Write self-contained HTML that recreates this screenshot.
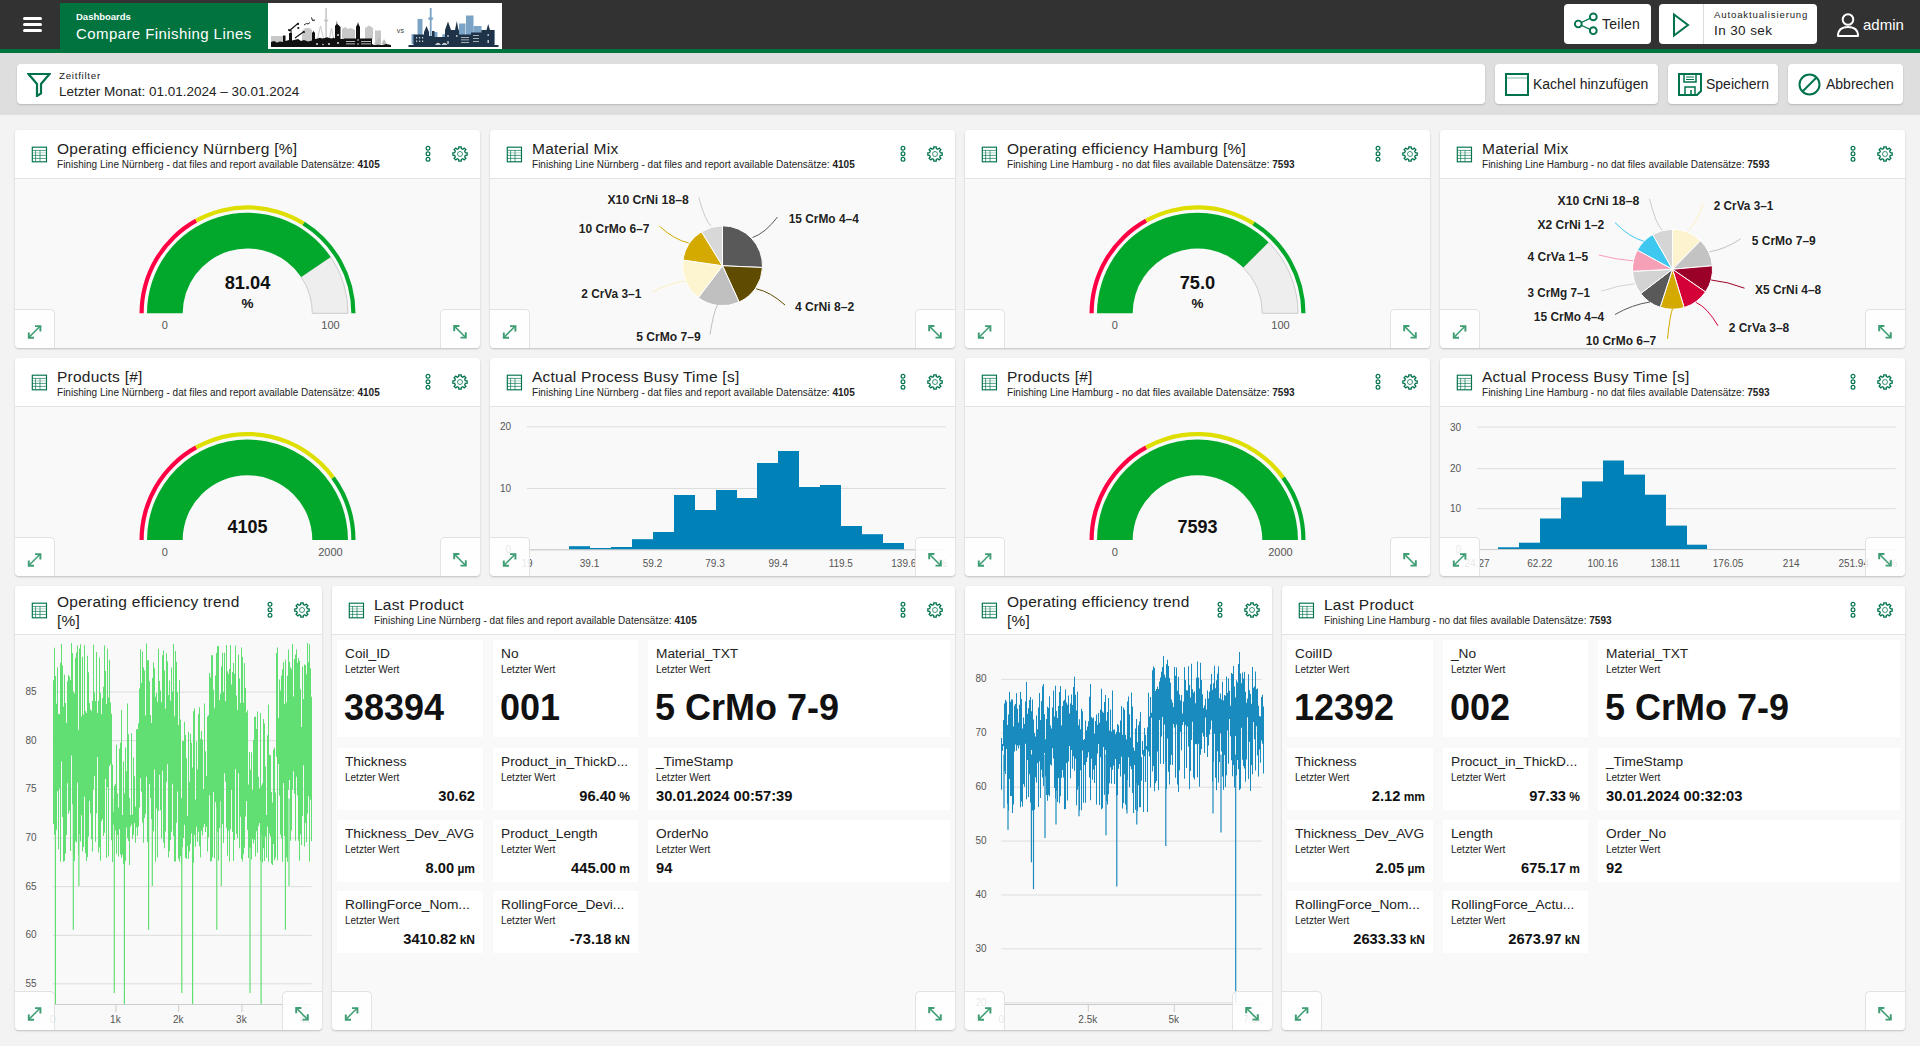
<!DOCTYPE html><html><head><meta charset="utf-8"><style>

*{box-sizing:border-box}
html,body{margin:0;padding:0}
body{width:1920px;height:1046px;overflow:hidden;background:#f3f3f3;font-family:"Liberation Sans", sans-serif;color:#222;position:relative}
.abs{position:absolute}
.hdr{position:absolute;left:0;top:0;width:1920px;height:49px;background:#323232}
.stripe{position:absolute;left:0;top:49px;width:1920px;height:4px;background:#00733f}
.tb{position:absolute;left:0;top:53px;width:1920px;height:62px;background:#dedede}
.wbtn{position:absolute;background:#fff;border-radius:4px}
.sbtn{position:absolute;background:#fff;border-radius:4px;box-shadow:0 1px 2px rgba(0,0,0,.18)}
.tile{position:absolute;background:#f9f9f9;border-radius:4px;box-shadow:0 1px 2px rgba(0,0,0,.22);overflow:hidden}
.th{position:absolute;left:0;top:0;right:0;height:49px;background:#fff;border-bottom:1px solid #e2e2e2}
.tt{position:absolute;font-size:15.5px;letter-spacing:0.24px;line-height:19px;white-space:nowrap;color:#222}
.ts{position:absolute;font-size:10px;letter-spacing:0.02px;line-height:12px;white-space:nowrap;color:#222}
.ts b{font-weight:bold}
.xb{position:absolute;width:40px;height:39px;background:rgba(255,255,255,.86);border:0 solid #e2e2e2}
.card{position:absolute;background:#fff}
.cl{position:absolute;left:8px;top:6px;font-size:13.7px;white-space:nowrap;color:#222}
.cs{position:absolute;left:8px;top:24px;font-size:10px;white-space:nowrap;color:#222}
.cv{position:absolute;left:7px;top:47px;font-size:36px;font-weight:bold;white-space:nowrap;color:#111}
.cm{position:absolute;font-size:14.7px;font-weight:bold;white-space:nowrap;color:#111}

</style></head><body>
<div class="hdr">
<div class="abs" style="left:23px;top:17px;width:19px;height:3px;background:#fff;border-radius:2px"></div>
<div class="abs" style="left:23px;top:23px;width:19px;height:3px;background:#fff;border-radius:2px"></div>
<div class="abs" style="left:23px;top:29px;width:19px;height:3px;background:#fff;border-radius:2px"></div>
<div class="abs" style="left:60px;top:3px;width:208px;height:46px;background:#00733f"></div>
<div class="abs" style="left:76px;top:11px;font-size:9.5px;font-weight:bold;color:#fff;white-space:nowrap">Dashboards</div>
<div class="abs" style="left:76px;top:25px;font-size:15px;letter-spacing:0.42px;color:#fff;white-space:nowrap">Compare Finishing Lines</div>
<div class="abs" style="left:268px;top:3px;width:234px;height:46px;background:#fff"><svg width="234" height="46" viewBox="0 0 234 46" style="position:absolute;left:0;top:0">
<g fill="#c8c8c8">
<rect x="3" y="33" width="12" height="6"/>
<path d="M34 40 V28 Q39 22 44 27 V40Z"/>
<path d="M49 38 L52.5 23 L56 38Z" fill="none" stroke="#c8c8c8" stroke-width="1"/>
<path d="M61 38 L63.5 25 L66 38Z" fill="none" stroke="#c8c8c8" stroke-width="1"/>
<rect x="57.3" y="5" width="1.6" height="33"/>
<rect x="56" y="16.5" width="4.2" height="2"/>
<path d="M74 36 V26 L77 24 L80 26 L83 25 L87 27 V36Z"/>
<path d="M97 36 V25 L101 22.5 L105 25 V36Z"/>
<rect x="107" y="27.5" width="6" height="12"/>
</g>
<g fill="#111">
<path d="M3 44 V39 L6 38 L9 39.5 L12 38.5 L15 39 V32.5 H17.5 V38 L21 37 V30 H24 V37.5 L30 36 L33 38 L36 37 L40 38.5 L44 37.5 V30 L45.5 28 L47 30 V36 L50 35.5 Q52 34 54 35.5 L57 35 Q59 33.5 61 35 L64 35.5 Q65.5 34 67 35.5 V23 L68.5 21 L68.8 17.5 L69.4 21 L71 22.5 L72.5 24 V36 H76 V35.5 H88 V24 L89.3 21.5 L90 19 L90.7 21.5 L92 24 V35.5 H104 V41 L106 42 L110 41.5 L114 42 L118 41 L123 42 V44Z"/>
<path d="M21 28 L30.5 20 M27 35 L36 28.5 M23 30 L23 27" stroke="#111" stroke-width="1.1"/>
<circle cx="30" cy="21" r="1.1"/><circle cx="30.3" cy="25" r="1.1"/><circle cx="21" cy="27" r="1"/><circle cx="36" cy="29" r="1"/>
<path d="M36 22 L38.5 20.5 L40 21 L42 19.5" stroke="#111" stroke-width="0.9" fill="none"/>
<path d="M43.5 14.5 L44.5 17.5 L47 17" stroke="#111" stroke-width="1" fill="none"/>
</g>
<g fill="#bdbdbd">
<path d="M106 41 L112 33 L113 41Z M113.5 41 L116 36 L119 41Z"/>
</g>
<text x="128.8" y="29.6" font-family="Liberation Sans" font-size="7.2" fill="#444">vs</text>
<g fill="#7ba3c6">
<rect x="149.5" y="16" width="5" height="25"/>
<rect x="161.8" y="5" width="1.8" height="36"/>
<ellipse cx="162.7" cy="15.5" rx="2.6" ry="1.6"/>
<rect x="191" y="20.5" width="6.5" height="20"/>
<rect x="198" y="12.5" width="7.5" height="28"/>
<rect x="205.5" y="23" width="8" height="18"/>
<rect x="222" y="27" width="4.5" height="14"/>
<rect x="143.5" y="31.2" width="3" height="10"/><rect x="166" y="29" width="3.4" height="12"/><rect x="174.4" y="31.2" width="5" height="10"/><rect x="214" y="30" width="4.4" height="11"/><rect x="224" y="27.3" width="2.4" height="14"/>
</g>
<g fill="#1e3248">
<path d="M140.5 44 V42 H145.5 V31.5 H156 V29 L158.5 23 L161 29 V33 H164 V28 H166.5 V34 H177 V27 L180 18.5 L183 27 H187 L188.8 18 L190.5 27 H191 V31.5 H203 V29.5 H213.4 V27 H218.5 L220.2 21 L222 27 H226.4 V42 H230.5 V44Z"/>
</g>
<g fill="#ffffff" opacity=".75">
<path d="M167 42 Q170 37.5 173 42Z M173.5 42 Q176.5 37.5 179.5 42Z"/>
<rect x="148" y="34" width="1.2" height="1.5"/><rect x="151" y="34" width="1.2" height="1.5"/><rect x="154" y="34" width="1.2" height="1.5"/>
<rect x="148" y="37.5" width="1.2" height="1.5"/><rect x="151" y="37.5" width="1.2" height="1.5"/><rect x="154" y="37.5" width="1.2" height="1.5"/>
<rect x="193" y="34" width="8" height="0.8"/><rect x="193" y="36.5" width="8" height="0.8"/><rect x="193" y="39" width="8" height="0.8"/>
<rect x="205" y="32" width="6" height="0.8"/><rect x="205" y="35" width="6" height="0.8"/><rect x="205" y="38" width="6" height="0.8"/>
<circle cx="180" cy="33" r="0.9"/><circle cx="188.8" cy="33" r="0.9"/><circle cx="220.2" cy="32" r="0.9"/>
<rect x="179.3" y="38" width="1.4" height="3"/><rect x="219.5" y="37" width="1.4" height="3"/>
</g>
<g fill="#ffffff" opacity=".85">
<rect x="78" y="38" width="9" height="0.8"/><rect x="78" y="40.5" width="9" height="0.8"/>
<rect x="93" y="38" width="10" height="0.8"/><rect x="93" y="40.5" width="10" height="0.8"/>
<circle cx="70" cy="32" r="1"/><circle cx="70" cy="40" r="1"/><circle cx="90" cy="37" r="0.8"/><circle cx="90" cy="41" r="0.8"/>
<circle cx="49" cy="41" r="1"/><circle cx="55" cy="41.5" r="0.8"/><circle cx="61" cy="41" r="1"/>
</g>
</svg></div>
<div class="wbtn" style="left:1564px;top:4px;width:87px;height:40px">
<svg style="position:absolute;left:9px;top:8px" width="26" height="26" viewBox="0 0 26 26">
<path d="M5.3 12 L20 4.9 M5.3 12 L20 18.7" stroke="#00734a" stroke-width="1.3" fill="none"/>
<circle cx="5.3" cy="12" r="3.4" fill="#fff" stroke="#00734a" stroke-width="1.9"/>
<circle cx="20.3" cy="4.9" r="3.4" fill="#fff" stroke="#00734a" stroke-width="1.9"/>
<circle cx="20.3" cy="18.7" r="3.4" fill="#fff" stroke="#00734a" stroke-width="1.9"/>
</svg>
<div class="abs" style="left:38px;top:12px;font-size:14px;letter-spacing:0.25px;color:#222;white-space:nowrap">Teilen</div>
</div>
<div class="wbtn" style="left:1659px;top:4px;width:158px;height:40px">
<svg style="position:absolute;left:12px;top:8px" width="20" height="26" viewBox="0 0 20 26">
<path d="M3 2.5 L17 13 L3 23.5Z" fill="none" stroke="#00734a" stroke-width="2" stroke-linejoin="miter"/>
</svg>
<div class="abs" style="left:44px;top:0;width:1px;height:40px;background:#dcdcdc"></div>
<div class="abs" style="left:55px;top:5px;font-size:9.6px;color:#222;white-space:nowrap;letter-spacing:0.85px">Autoaktualisierung</div>
<div class="abs" style="left:55px;top:19px;font-size:13.5px;letter-spacing:0.4px;color:#222;white-space:nowrap">In 30 sek</div>
</div>
<svg style="position:absolute;left:1836px;top:12px" width="24" height="26" viewBox="0 0 24 26">
<circle cx="12" cy="7.5" r="5.3" fill="none" stroke="#fff" stroke-width="2"/>
<path d="M2 24 C2 17 6.5 15 12 15 C17.5 15 22 17 22 24 Z" fill="none" stroke="#fff" stroke-width="2" stroke-linejoin="round"/>
</svg>
<div class="abs" style="left:1863px;top:16px;font-size:15px;color:#fff;white-space:nowrap">admin</div>
</div>
<div class="stripe"></div>
<div class="tb">
<div class="sbtn" style="left:17px;top:11px;width:1468px;height:40px">
<svg style="position:absolute;left:10px;top:8px" width="24" height="25" viewBox="0 0 24 25">
<path d="M1.5 2 H22.5 L14 12 V21.5 L10 24 V12 Z" fill="none" stroke="#00734a" stroke-width="2.2" stroke-linejoin="miter"/>
</svg>
<div class="abs" style="left:42px;top:6px;font-size:9.8px;color:#222;white-space:nowrap;letter-spacing:0.7px">Zeitfilter</div>
<div class="abs" style="left:42px;top:20px;font-size:13.5px;color:#222;white-space:nowrap">Letzter Monat: 01.01.2024 – 30.01.2024</div>
</div>
<div class="sbtn" style="left:1495px;top:11px;width:163px;height:40px">
<svg style="position:absolute;left:10px;top:9px" width="24" height="23" viewBox="0 0 24 23">
<rect x="1" y="1" width="22" height="21" fill="none" stroke="#00734a" stroke-width="2"/>
<path d="M1 5 H23" stroke="#00734a" stroke-width="1" opacity=".5"/>
</svg>
<div class="abs" style="left:38px;top:12px;font-size:14px;color:#222;white-space:nowrap">Kachel hinzufügen</div>
</div>
<div class="sbtn" style="left:1668px;top:11px;width:110px;height:40px">
<svg style="position:absolute;left:10px;top:9px" width="24" height="23" viewBox="0 0 24 23">
<path d="M1 1 H23 V18 L19 22 H1 Z" fill="none" stroke="#00734a" stroke-width="2"/>
<path d="M6 1 V9 H18 V1" fill="none" stroke="#00734a" stroke-width="1.5"/>
<path d="M8 4 H16 M8 6.5 H16" stroke="#00734a" stroke-width="1.2"/>
<path d="M7 22 V14 H17 V22 M13 17 V22" fill="none" stroke="#00734a" stroke-width="1.5"/>
</svg>
<div class="abs" style="left:38px;top:12px;font-size:14px;color:#222;white-space:nowrap">Speichern</div>
</div>
<div class="sbtn" style="left:1788px;top:11px;width:115px;height:40px">
<svg style="position:absolute;left:10px;top:9px" width="24" height="23" viewBox="0 0 24 23">
<circle cx="11.5" cy="11.5" r="10" fill="none" stroke="#00734a" stroke-width="2"/>
<path d="M4.5 18.5 L18.5 4.5" stroke="#00734a" stroke-width="2"/>
</svg>
<div class="abs" style="left:38px;top:12px;font-size:14px;color:#222;white-space:nowrap">Abbrechen</div>
</div>
</div>
<div class="tile" style="left:15px;top:130px;width:465px;height:218px">
<div class="th">
<svg style="position:absolute;left:15.5px;top:15.5px" width="17" height="17" viewBox="0 0 17 17">
<rect x="1.3" y="1.2" width="14.2" height="14.6" fill="none" stroke="#00734a" stroke-width="1.15"/>
<path d="M1.3 4.4H15.5M1.3 9.4H15.5M1.3 12.4H15.5M4.6 4.4V15.8M9 4.4V15.8" stroke="#00734a" stroke-width=".75" fill="none" opacity=".9"/>
<path d="M1.3 6.9H15.5" stroke="#00734a" stroke-width=".7" fill="none" opacity=".45"/>
</svg>
<div class="tt" style="left:42px;top:9px">Operating efficiency Nürnberg [%]</div>
<div class="ts" style="left:42px;top:29px">Finishing Line Nürnberg - dat files and report available Datensätze: <b>4105</b></div>
<svg style="position:absolute;left:408px;top:14px" width="10" height="20" viewBox="0 0 10 20">
<circle cx="5" cy="4.3" r="1.9" fill="none" stroke="#00734a" stroke-width="1.2"/>
<circle cx="5" cy="9.8" r="1.9" fill="none" stroke="#00734a" stroke-width="1.2"/>
<circle cx="5" cy="15.2" r="1.9" fill="none" stroke="#00734a" stroke-width="1.2"/>
</svg>
<svg style="position:absolute;left:435px;top:14px" width="20" height="20" viewBox="0 0 20 20">
<path d="M8.67 4.66 L8.81 2.85 L11.19 2.85 L11.33 4.66 L12.84 5.29 L14.22 4.10 L15.90 5.78 L14.71 7.16 L15.34 8.67 L17.15 8.81 L17.15 11.19 L15.34 11.33 L14.71 12.84 L15.90 14.22 L14.22 15.90 L12.84 14.71 L11.33 15.34 L11.19 17.15 L8.81 17.15 L8.67 15.34 L7.16 14.71 L5.78 15.90 L4.10 14.22 L5.29 12.84 L4.66 11.33 L2.85 11.19 L2.85 8.81 L4.66 8.67 L5.29 7.16 L4.10 5.78 L5.78 4.10 L7.16 5.29Z" fill="none" stroke="#00734a" stroke-width="1.3" stroke-linejoin="miter"/>
<circle cx="10" cy="10" r="2.5" fill="none" stroke="#00734a" stroke-width="0.9" opacity=".85"/>
</svg>
</div>
<svg style="position:absolute;left:0;top:0" width="465" height="218"><path d="M124.50 183.30 A108 108 0 0 1 180.14 88.84 L182.18 92.51 A103.8 103.8 0 0 0 128.70 183.30Z" fill="#ff0045"/><path d="M180.14 88.84 A108 108 0 0 1 289.73 91.71 L287.51 95.27 A103.8 103.8 0 0 0 182.18 92.51Z" fill="#dede00"/><path d="M289.73 91.71 A108 108 0 0 1 340.50 183.30 L336.30 183.30 A103.8 103.8 0 0 0 287.51 95.27Z" fill="#02a82b"/><path d="M315.69 126.92 A100.5 100.5 0 0 1 333.00 183.30 L297.30 183.30 A64.8 64.8 0 0 0 286.14 146.94Z" fill="#eeeeee" stroke="#cccccc" stroke-width="1"/><path d="M132.00 183.30 A100.5 100.5 0 0 1 315.69 126.92 L286.14 146.94 A64.8 64.8 0 0 0 167.70 183.30Z" fill="#02a82b"/><text x="232.5" y="158.5" text-anchor="middle" font-family="Liberation Sans" font-weight="bold" font-size="18.3" fill="#111">81.04</text><text x="232.5" y="177.8" text-anchor="middle" font-family="Liberation Sans" font-weight="bold" font-size="13.5" fill="#111">%</text><text x="149.8" y="198.8" text-anchor="middle" font-family="Liberation Sans" font-size="11" fill="#555">0</text><text x="315.5" y="198.8" text-anchor="middle" font-family="Liberation Sans" font-size="11" fill="#555">100</text></svg>
<div class="xb" style="left:0px;top:179px;border-width:1px 1px 0 0;border-radius:0 5px 0 4px"><svg width="40" height="40" viewBox="0 0 40 40" style="position:absolute;left:-1px;top:-1px">
<path d="M15.1 28.2 L26 17.3" stroke="#3f9d74" stroke-width="1.55" fill="none"/>
<path d="M21 17.1 H26.4 V22.5" stroke="#3f9d74" stroke-width="1.95" fill="none"/>
<path d="M14.8 23.5 V28.7 H20" stroke="#3f9d74" stroke-width="1.95" fill="none"/>
</svg></div>
<div class="xb" style="left:425px;top:179px;border-width:1px 0 0 1px;border-radius:5px 0 4px 0"><svg width="40" height="40" viewBox="0 0 40 40" style="position:absolute;left:-1px;top:-1px">
<path d="M14.6 17.4 L25.4 28.2" stroke="#3f9d74" stroke-width="1.55" fill="none"/>
<path d="M14.2 22.2 V17 H19.4" stroke="#3f9d74" stroke-width="1.95" fill="none"/>
<path d="M25.8 23.2 V28.6 H20.5" stroke="#3f9d74" stroke-width="1.95" fill="none"/>
</svg></div>
</div>
<div class="tile" style="left:490px;top:130px;width:465px;height:218px">
<div class="th">
<svg style="position:absolute;left:15.5px;top:15.5px" width="17" height="17" viewBox="0 0 17 17">
<rect x="1.3" y="1.2" width="14.2" height="14.6" fill="none" stroke="#00734a" stroke-width="1.15"/>
<path d="M1.3 4.4H15.5M1.3 9.4H15.5M1.3 12.4H15.5M4.6 4.4V15.8M9 4.4V15.8" stroke="#00734a" stroke-width=".75" fill="none" opacity=".9"/>
<path d="M1.3 6.9H15.5" stroke="#00734a" stroke-width=".7" fill="none" opacity=".45"/>
</svg>
<div class="tt" style="left:42px;top:9px">Material Mix</div>
<div class="ts" style="left:42px;top:29px">Finishing Line Nürnberg - dat files and report available Datensätze: <b>4105</b></div>
<svg style="position:absolute;left:408px;top:14px" width="10" height="20" viewBox="0 0 10 20">
<circle cx="5" cy="4.3" r="1.9" fill="none" stroke="#00734a" stroke-width="1.2"/>
<circle cx="5" cy="9.8" r="1.9" fill="none" stroke="#00734a" stroke-width="1.2"/>
<circle cx="5" cy="15.2" r="1.9" fill="none" stroke="#00734a" stroke-width="1.2"/>
</svg>
<svg style="position:absolute;left:435px;top:14px" width="20" height="20" viewBox="0 0 20 20">
<path d="M8.67 4.66 L8.81 2.85 L11.19 2.85 L11.33 4.66 L12.84 5.29 L14.22 4.10 L15.90 5.78 L14.71 7.16 L15.34 8.67 L17.15 8.81 L17.15 11.19 L15.34 11.33 L14.71 12.84 L15.90 14.22 L14.22 15.90 L12.84 14.71 L11.33 15.34 L11.19 17.15 L8.81 17.15 L8.67 15.34 L7.16 14.71 L5.78 15.90 L4.10 14.22 L5.29 12.84 L4.66 11.33 L2.85 11.19 L2.85 8.81 L4.66 8.67 L5.29 7.16 L4.10 5.78 L5.78 4.10 L7.16 5.29Z" fill="none" stroke="#00734a" stroke-width="1.3" stroke-linejoin="miter"/>
<circle cx="10" cy="10" r="2.5" fill="none" stroke="#00734a" stroke-width="0.9" opacity=".85"/>
</svg>
</div>
<svg style="position:absolute;left:0;top:0" width="465" height="218"><path d="M232.5 135.75 L232.50 95.75 A40 40 0 0 1 272.46 137.49Z" fill="#595959" stroke="#fff" stroke-width="1" stroke-linejoin="round"/><path d="M232.5 135.75 L272.46 137.49 A40 40 0 0 1 249.15 172.12Z" fill="#604c00" stroke="#fff" stroke-width="1" stroke-linejoin="round"/><path d="M232.5 135.75 L249.15 172.12 A40 40 0 0 1 208.32 167.61Z" fill="#c0c0c0" stroke="#fff" stroke-width="1" stroke-linejoin="round"/><path d="M232.5 135.75 L208.32 167.61 A40 40 0 0 1 192.92 129.98Z" fill="#fdf5d0" stroke="#fff" stroke-width="1" stroke-linejoin="round"/><path d="M232.5 135.75 L192.92 129.98 A40 40 0 0 1 211.48 101.72Z" fill="#d4a900" stroke="#fff" stroke-width="1" stroke-linejoin="round"/><path d="M232.5 135.75 L211.48 101.72 A40 40 0 0 1 232.50 95.75Z" fill="#d8d8d8" stroke="#fff" stroke-width="1" stroke-linejoin="round"/><path d="M208.8 67.5 Q214.9 90.3 221.0 96.0" fill="none" stroke="#cccccc" stroke-width="1"/><text x="117.5" y="74" textLength="81.2" lengthAdjust="spacingAndGlyphs" font-family="Liberation Sans" font-weight="bold" font-size="12" fill="#222" stroke="#fff" stroke-width="2" paint-order="stroke" stroke-linejoin="round">X10 CrNi 18–8</text><path d="M287.5 87.0 Q275.0 103.4 262.5 107.5" fill="none" stroke="#595959" stroke-width="1"/><text x="298.75" y="93.25" textLength="70.0" lengthAdjust="spacingAndGlyphs" font-family="Liberation Sans" font-weight="bold" font-size="12" fill="#222" stroke="#fff" stroke-width="2" paint-order="stroke" stroke-linejoin="round">15 CrMo 4–4</text><path d="M169.5 96.2 Q184.1 109.7 198.8 113.0" fill="none" stroke="#d4a900" stroke-width="1"/><text x="88.75" y="103.25" textLength="70.8" lengthAdjust="spacingAndGlyphs" font-family="Liberation Sans" font-weight="bold" font-size="12" fill="#222" stroke="#fff" stroke-width="2" paint-order="stroke" stroke-linejoin="round">10 CrMo 6–7</text><path d="M162.5 162.0 Q178.8 153.4 195.0 151.2" fill="none" stroke="#fdf0c0" stroke-width="1"/><text x="91.25" y="168.25" textLength="60.0" lengthAdjust="spacingAndGlyphs" font-family="Liberation Sans" font-weight="bold" font-size="12" fill="#222" stroke="#fff" stroke-width="2" paint-order="stroke" stroke-linejoin="round">2 CrVa 3–1</text><path d="M295.0 175.0 Q280.6 162.0 266.2 158.8" fill="none" stroke="#604c00" stroke-width="1"/><text x="305" y="181" textLength="59.2" lengthAdjust="spacingAndGlyphs" font-family="Liberation Sans" font-weight="bold" font-size="12" fill="#222" stroke="#fff" stroke-width="2" paint-order="stroke" stroke-linejoin="round">4 CrNi 8–2</text><path d="M220.0 204.5 Q223.8 180.9 227.5 175.0" fill="none" stroke="#c0c0c0" stroke-width="1"/><text x="146.25" y="211" textLength="64.5" lengthAdjust="spacingAndGlyphs" font-family="Liberation Sans" font-weight="bold" font-size="12" fill="#222" stroke="#fff" stroke-width="2" paint-order="stroke" stroke-linejoin="round">5 CrMo 7–9</text></svg>
<div class="xb" style="left:0px;top:179px;border-width:1px 1px 0 0;border-radius:0 5px 0 4px"><svg width="40" height="40" viewBox="0 0 40 40" style="position:absolute;left:-1px;top:-1px">
<path d="M15.1 28.2 L26 17.3" stroke="#3f9d74" stroke-width="1.55" fill="none"/>
<path d="M21 17.1 H26.4 V22.5" stroke="#3f9d74" stroke-width="1.95" fill="none"/>
<path d="M14.8 23.5 V28.7 H20" stroke="#3f9d74" stroke-width="1.95" fill="none"/>
</svg></div>
<div class="xb" style="left:425px;top:179px;border-width:1px 0 0 1px;border-radius:5px 0 4px 0"><svg width="40" height="40" viewBox="0 0 40 40" style="position:absolute;left:-1px;top:-1px">
<path d="M14.6 17.4 L25.4 28.2" stroke="#3f9d74" stroke-width="1.55" fill="none"/>
<path d="M14.2 22.2 V17 H19.4" stroke="#3f9d74" stroke-width="1.95" fill="none"/>
<path d="M25.8 23.2 V28.6 H20.5" stroke="#3f9d74" stroke-width="1.95" fill="none"/>
</svg></div>
</div>
<div class="tile" style="left:965px;top:130px;width:465px;height:218px">
<div class="th">
<svg style="position:absolute;left:15.5px;top:15.5px" width="17" height="17" viewBox="0 0 17 17">
<rect x="1.3" y="1.2" width="14.2" height="14.6" fill="none" stroke="#00734a" stroke-width="1.15"/>
<path d="M1.3 4.4H15.5M1.3 9.4H15.5M1.3 12.4H15.5M4.6 4.4V15.8M9 4.4V15.8" stroke="#00734a" stroke-width=".75" fill="none" opacity=".9"/>
<path d="M1.3 6.9H15.5" stroke="#00734a" stroke-width=".7" fill="none" opacity=".45"/>
</svg>
<div class="tt" style="left:42px;top:9px">Operating efficiency Hamburg [%]</div>
<div class="ts" style="left:42px;top:29px">Finishing Line Hamburg - no dat files available Datensätze: <b>7593</b></div>
<svg style="position:absolute;left:408px;top:14px" width="10" height="20" viewBox="0 0 10 20">
<circle cx="5" cy="4.3" r="1.9" fill="none" stroke="#00734a" stroke-width="1.2"/>
<circle cx="5" cy="9.8" r="1.9" fill="none" stroke="#00734a" stroke-width="1.2"/>
<circle cx="5" cy="15.2" r="1.9" fill="none" stroke="#00734a" stroke-width="1.2"/>
</svg>
<svg style="position:absolute;left:435px;top:14px" width="20" height="20" viewBox="0 0 20 20">
<path d="M8.67 4.66 L8.81 2.85 L11.19 2.85 L11.33 4.66 L12.84 5.29 L14.22 4.10 L15.90 5.78 L14.71 7.16 L15.34 8.67 L17.15 8.81 L17.15 11.19 L15.34 11.33 L14.71 12.84 L15.90 14.22 L14.22 15.90 L12.84 14.71 L11.33 15.34 L11.19 17.15 L8.81 17.15 L8.67 15.34 L7.16 14.71 L5.78 15.90 L4.10 14.22 L5.29 12.84 L4.66 11.33 L2.85 11.19 L2.85 8.81 L4.66 8.67 L5.29 7.16 L4.10 5.78 L5.78 4.10 L7.16 5.29Z" fill="none" stroke="#00734a" stroke-width="1.3" stroke-linejoin="miter"/>
<circle cx="10" cy="10" r="2.5" fill="none" stroke="#00734a" stroke-width="0.9" opacity=".85"/>
</svg>
</div>
<svg style="position:absolute;left:0;top:0" width="465" height="218"><path d="M124.50 183.30 A108 108 0 0 1 180.14 88.84 L182.18 92.51 A103.8 103.8 0 0 0 128.70 183.30Z" fill="#ff0045"/><path d="M180.14 88.84 A108 108 0 0 1 289.73 91.71 L287.51 95.27 A103.8 103.8 0 0 0 182.18 92.51Z" fill="#dede00"/><path d="M289.73 91.71 A108 108 0 0 1 340.50 183.30 L336.30 183.30 A103.8 103.8 0 0 0 287.51 95.27Z" fill="#02a82b"/><path d="M303.56 112.24 A100.5 100.5 0 0 1 333.00 183.30 L297.30 183.30 A64.8 64.8 0 0 0 278.32 137.48Z" fill="#eeeeee" stroke="#cccccc" stroke-width="1"/><path d="M132.00 183.30 A100.5 100.5 0 0 1 303.56 112.24 L278.32 137.48 A64.8 64.8 0 0 0 167.70 183.30Z" fill="#02a82b"/><text x="232.5" y="158.5" text-anchor="middle" font-family="Liberation Sans" font-weight="bold" font-size="18.3" fill="#111">75.0</text><text x="232.5" y="177.8" text-anchor="middle" font-family="Liberation Sans" font-weight="bold" font-size="13.5" fill="#111">%</text><text x="149.8" y="198.8" text-anchor="middle" font-family="Liberation Sans" font-size="11" fill="#555">0</text><text x="315.5" y="198.8" text-anchor="middle" font-family="Liberation Sans" font-size="11" fill="#555">100</text></svg>
<div class="xb" style="left:0px;top:179px;border-width:1px 1px 0 0;border-radius:0 5px 0 4px"><svg width="40" height="40" viewBox="0 0 40 40" style="position:absolute;left:-1px;top:-1px">
<path d="M15.1 28.2 L26 17.3" stroke="#3f9d74" stroke-width="1.55" fill="none"/>
<path d="M21 17.1 H26.4 V22.5" stroke="#3f9d74" stroke-width="1.95" fill="none"/>
<path d="M14.8 23.5 V28.7 H20" stroke="#3f9d74" stroke-width="1.95" fill="none"/>
</svg></div>
<div class="xb" style="left:425px;top:179px;border-width:1px 0 0 1px;border-radius:5px 0 4px 0"><svg width="40" height="40" viewBox="0 0 40 40" style="position:absolute;left:-1px;top:-1px">
<path d="M14.6 17.4 L25.4 28.2" stroke="#3f9d74" stroke-width="1.55" fill="none"/>
<path d="M14.2 22.2 V17 H19.4" stroke="#3f9d74" stroke-width="1.95" fill="none"/>
<path d="M25.8 23.2 V28.6 H20.5" stroke="#3f9d74" stroke-width="1.95" fill="none"/>
</svg></div>
</div>
<div class="tile" style="left:1440px;top:130px;width:465px;height:218px">
<div class="th">
<svg style="position:absolute;left:15.5px;top:15.5px" width="17" height="17" viewBox="0 0 17 17">
<rect x="1.3" y="1.2" width="14.2" height="14.6" fill="none" stroke="#00734a" stroke-width="1.15"/>
<path d="M1.3 4.4H15.5M1.3 9.4H15.5M1.3 12.4H15.5M4.6 4.4V15.8M9 4.4V15.8" stroke="#00734a" stroke-width=".75" fill="none" opacity=".9"/>
<path d="M1.3 6.9H15.5" stroke="#00734a" stroke-width=".7" fill="none" opacity=".45"/>
</svg>
<div class="tt" style="left:42px;top:9px">Material Mix</div>
<div class="ts" style="left:42px;top:29px">Finishing Line Hamburg - no dat files available Datensätze: <b>7593</b></div>
<svg style="position:absolute;left:408px;top:14px" width="10" height="20" viewBox="0 0 10 20">
<circle cx="5" cy="4.3" r="1.9" fill="none" stroke="#00734a" stroke-width="1.2"/>
<circle cx="5" cy="9.8" r="1.9" fill="none" stroke="#00734a" stroke-width="1.2"/>
<circle cx="5" cy="15.2" r="1.9" fill="none" stroke="#00734a" stroke-width="1.2"/>
</svg>
<svg style="position:absolute;left:435px;top:14px" width="20" height="20" viewBox="0 0 20 20">
<path d="M8.67 4.66 L8.81 2.85 L11.19 2.85 L11.33 4.66 L12.84 5.29 L14.22 4.10 L15.90 5.78 L14.71 7.16 L15.34 8.67 L17.15 8.81 L17.15 11.19 L15.34 11.33 L14.71 12.84 L15.90 14.22 L14.22 15.90 L12.84 14.71 L11.33 15.34 L11.19 17.15 L8.81 17.15 L8.67 15.34 L7.16 14.71 L5.78 15.90 L4.10 14.22 L5.29 12.84 L4.66 11.33 L2.85 11.19 L2.85 8.81 L4.66 8.67 L5.29 7.16 L4.10 5.78 L5.78 4.10 L7.16 5.29Z" fill="none" stroke="#00734a" stroke-width="1.3" stroke-linejoin="miter"/>
<circle cx="10" cy="10" r="2.5" fill="none" stroke="#00734a" stroke-width="0.9" opacity=".85"/>
</svg>
</div>
<svg style="position:absolute;left:0;top:0" width="465" height="218"><path d="M232.5 139.25 L232.50 99.25 A40 40 0 0 1 260.54 110.72Z" fill="#fdf3cf" stroke="#fff" stroke-width="1" stroke-linejoin="round"/><path d="M232.5 139.25 L260.54 110.72 A40 40 0 0 1 272.35 135.76Z" fill="#c3c3c3" stroke="#fff" stroke-width="1" stroke-linejoin="round"/><path d="M232.5 139.25 L272.35 135.76 A40 40 0 0 1 265.47 161.91Z" fill="#9b0029" stroke="#fff" stroke-width="1" stroke-linejoin="round"/><path d="M232.5 139.25 L265.47 161.91 A40 40 0 0 1 244.13 177.52Z" fill="#d40038" stroke="#fff" stroke-width="1" stroke-linejoin="round"/><path d="M232.5 139.25 L244.13 177.52 A40 40 0 0 1 220.14 177.29Z" fill="#d4a900" stroke="#fff" stroke-width="1" stroke-linejoin="round"/><path d="M232.5 139.25 L220.14 177.29 A40 40 0 0 1 200.68 163.49Z" fill="#595959" stroke="#fff" stroke-width="1" stroke-linejoin="round"/><path d="M232.5 139.25 L200.68 163.49 A40 40 0 0 1 192.55 141.27Z" fill="#d3d3d3" stroke="#fff" stroke-width="1" stroke-linejoin="round"/><path d="M232.5 139.25 L192.55 141.27 A40 40 0 0 1 197.41 120.04Z" fill="#f6a0b8" stroke="#fff" stroke-width="1" stroke-linejoin="round"/><path d="M232.5 139.25 L197.41 120.04 A40 40 0 0 1 212.68 104.50Z" fill="#3ec8f0" stroke="#fff" stroke-width="1" stroke-linejoin="round"/><path d="M232.5 139.25 L212.68 104.50 A40 40 0 0 1 232.50 99.25Z" fill="#d5d5d5" stroke="#fff" stroke-width="1" stroke-linejoin="round"/><path d="M209.5 68.8 Q215.8 93.8 222.0 100.0" fill="none" stroke="#cccccc" stroke-width="1"/><text x="117.5" y="74.75" textLength="81.8" lengthAdjust="spacingAndGlyphs" font-family="Liberation Sans" font-weight="bold" font-size="12" fill="#222" stroke="#fff" stroke-width="2" paint-order="stroke" stroke-linejoin="round">X10 CrNi 18–8</text><path d="M263.0 73.8 Q255.2 95.8 247.5 101.2" fill="none" stroke="#fdf0c0" stroke-width="1"/><text x="273.75" y="80.25" textLength="59.5" lengthAdjust="spacingAndGlyphs" font-family="Liberation Sans" font-weight="bold" font-size="12" fill="#222" stroke="#fff" stroke-width="2" paint-order="stroke" stroke-linejoin="round">2 CrVa 3–1</text><path d="M175.0 92.5 Q189.4 107.5 203.8 111.2" fill="none" stroke="#3ec8f0" stroke-width="1"/><text x="97.5" y="99" textLength="66.8" lengthAdjust="spacingAndGlyphs" font-family="Liberation Sans" font-weight="bold" font-size="12" fill="#222" stroke="#fff" stroke-width="2" paint-order="stroke" stroke-linejoin="round">X2 CrNi 1–2</text><path d="M300.8 108.8 Q285.1 119.2 269.5 121.8" fill="none" stroke="#c3c3c3" stroke-width="1"/><text x="311.75" y="115.25" textLength="64.0" lengthAdjust="spacingAndGlyphs" font-family="Liberation Sans" font-weight="bold" font-size="12" fill="#222" stroke="#fff" stroke-width="2" paint-order="stroke" stroke-linejoin="round">5 CrMo 7–9</text><path d="M158.8 125.0 Q175.9 129.6 193.0 130.8" fill="none" stroke="#f6a0b8" stroke-width="1"/><text x="87.5" y="131" textLength="60.8" lengthAdjust="spacingAndGlyphs" font-family="Liberation Sans" font-weight="bold" font-size="12" fill="#222" stroke="#fff" stroke-width="2" paint-order="stroke" stroke-linejoin="round">4 CrVa 1–5</text><path d="M161.2 161.2 Q177.9 155.2 194.5 153.8" fill="none" stroke="#d3d3d3" stroke-width="1"/><text x="87.5" y="166.5" textLength="62.5" lengthAdjust="spacingAndGlyphs" font-family="Liberation Sans" font-weight="bold" font-size="12" fill="#222" stroke="#fff" stroke-width="2" paint-order="stroke" stroke-linejoin="round">3 CrMg 7–1</text><path d="M304.5 158.2 Q287.9 151.7 271.2 150.0" fill="none" stroke="#9b0029" stroke-width="1"/><text x="315" y="164" textLength="66.2" lengthAdjust="spacingAndGlyphs" font-family="Liberation Sans" font-weight="bold" font-size="12" fill="#222" stroke="#fff" stroke-width="2" paint-order="stroke" stroke-linejoin="round">X5 CrNi 4–8</text><path d="M175.0 184.5 Q192.5 174.5 210.0 172.0" fill="none" stroke="#595959" stroke-width="1"/><text x="93.75" y="191" textLength="70.5" lengthAdjust="spacingAndGlyphs" font-family="Liberation Sans" font-weight="bold" font-size="12" fill="#222" stroke="#fff" stroke-width="2" paint-order="stroke" stroke-linejoin="round">15 CrMo 4–4</text><path d="M278.0 195.8 Q267.1 177.2 256.2 172.5" fill="none" stroke="#d40038" stroke-width="1"/><text x="288.75" y="202" textLength="60.5" lengthAdjust="spacingAndGlyphs" font-family="Liberation Sans" font-weight="bold" font-size="12" fill="#222" stroke="#fff" stroke-width="2" paint-order="stroke" stroke-linejoin="round">2 CrVa 3–8</text><path d="M227.5 208.8 Q230.0 184.8 232.5 178.8" fill="none" stroke="#d4a900" stroke-width="1"/><text x="145.75" y="214.75" textLength="70.5" lengthAdjust="spacingAndGlyphs" font-family="Liberation Sans" font-weight="bold" font-size="12" fill="#222" stroke="#fff" stroke-width="2" paint-order="stroke" stroke-linejoin="round">10 CrMo 6–7</text></svg>
<div class="xb" style="left:0px;top:179px;border-width:1px 1px 0 0;border-radius:0 5px 0 4px"><svg width="40" height="40" viewBox="0 0 40 40" style="position:absolute;left:-1px;top:-1px">
<path d="M15.1 28.2 L26 17.3" stroke="#3f9d74" stroke-width="1.55" fill="none"/>
<path d="M21 17.1 H26.4 V22.5" stroke="#3f9d74" stroke-width="1.95" fill="none"/>
<path d="M14.8 23.5 V28.7 H20" stroke="#3f9d74" stroke-width="1.95" fill="none"/>
</svg></div>
<div class="xb" style="left:425px;top:179px;border-width:1px 0 0 1px;border-radius:5px 0 4px 0"><svg width="40" height="40" viewBox="0 0 40 40" style="position:absolute;left:-1px;top:-1px">
<path d="M14.6 17.4 L25.4 28.2" stroke="#3f9d74" stroke-width="1.55" fill="none"/>
<path d="M14.2 22.2 V17 H19.4" stroke="#3f9d74" stroke-width="1.95" fill="none"/>
<path d="M25.8 23.2 V28.6 H20.5" stroke="#3f9d74" stroke-width="1.95" fill="none"/>
</svg></div>
</div>
<div class="tile" style="left:15px;top:358px;width:465px;height:218px">
<div class="th">
<svg style="position:absolute;left:15.5px;top:15.5px" width="17" height="17" viewBox="0 0 17 17">
<rect x="1.3" y="1.2" width="14.2" height="14.6" fill="none" stroke="#00734a" stroke-width="1.15"/>
<path d="M1.3 4.4H15.5M1.3 9.4H15.5M1.3 12.4H15.5M4.6 4.4V15.8M9 4.4V15.8" stroke="#00734a" stroke-width=".75" fill="none" opacity=".9"/>
<path d="M1.3 6.9H15.5" stroke="#00734a" stroke-width=".7" fill="none" opacity=".45"/>
</svg>
<div class="tt" style="left:42px;top:9px">Products [#]</div>
<div class="ts" style="left:42px;top:29px">Finishing Line Nürnberg - dat files and report available Datensätze: <b>4105</b></div>
<svg style="position:absolute;left:408px;top:14px" width="10" height="20" viewBox="0 0 10 20">
<circle cx="5" cy="4.3" r="1.9" fill="none" stroke="#00734a" stroke-width="1.2"/>
<circle cx="5" cy="9.8" r="1.9" fill="none" stroke="#00734a" stroke-width="1.2"/>
<circle cx="5" cy="15.2" r="1.9" fill="none" stroke="#00734a" stroke-width="1.2"/>
</svg>
<svg style="position:absolute;left:435px;top:14px" width="20" height="20" viewBox="0 0 20 20">
<path d="M8.67 4.66 L8.81 2.85 L11.19 2.85 L11.33 4.66 L12.84 5.29 L14.22 4.10 L15.90 5.78 L14.71 7.16 L15.34 8.67 L17.15 8.81 L17.15 11.19 L15.34 11.33 L14.71 12.84 L15.90 14.22 L14.22 15.90 L12.84 14.71 L11.33 15.34 L11.19 17.15 L8.81 17.15 L8.67 15.34 L7.16 14.71 L5.78 15.90 L4.10 14.22 L5.29 12.84 L4.66 11.33 L2.85 11.19 L2.85 8.81 L4.66 8.67 L5.29 7.16 L4.10 5.78 L5.78 4.10 L7.16 5.29Z" fill="none" stroke="#00734a" stroke-width="1.3" stroke-linejoin="miter"/>
<circle cx="10" cy="10" r="2.5" fill="none" stroke="#00734a" stroke-width="0.9" opacity=".85"/>
</svg>
</div>
<svg style="position:absolute;left:0;top:0" width="465" height="218"><path d="M124.50 182.00 A108 108 0 0 1 180.14 87.54 L182.18 91.21 A103.8 103.8 0 0 0 128.70 182.00Z" fill="#ff0045"/><path d="M180.14 87.54 A108 108 0 0 1 319.87 118.52 L316.48 120.99 A103.8 103.8 0 0 0 182.18 91.21Z" fill="#dede00"/><path d="M319.87 118.52 A108 108 0 0 1 340.50 182.00 L336.30 182.00 A103.8 103.8 0 0 0 316.48 120.99Z" fill="#02a82b"/><path d="M132.00 182.00 A100.5 100.5 0 0 1 333.00 182.00 L297.30 182.00 A64.8 64.8 0 0 0 167.70 182.00Z" fill="#02a82b"/><text x="232.5" y="174.8" text-anchor="middle" font-family="Liberation Sans" font-weight="bold" font-size="18" fill="#111">4105</text><text x="149.8" y="197.5" text-anchor="middle" font-family="Liberation Sans" font-size="11" fill="#555">0</text><text x="315.5" y="197.5" text-anchor="middle" font-family="Liberation Sans" font-size="11" fill="#555">2000</text></svg>
<div class="xb" style="left:0px;top:179px;border-width:1px 1px 0 0;border-radius:0 5px 0 4px"><svg width="40" height="40" viewBox="0 0 40 40" style="position:absolute;left:-1px;top:-1px">
<path d="M15.1 28.2 L26 17.3" stroke="#3f9d74" stroke-width="1.55" fill="none"/>
<path d="M21 17.1 H26.4 V22.5" stroke="#3f9d74" stroke-width="1.95" fill="none"/>
<path d="M14.8 23.5 V28.7 H20" stroke="#3f9d74" stroke-width="1.95" fill="none"/>
</svg></div>
<div class="xb" style="left:425px;top:179px;border-width:1px 0 0 1px;border-radius:5px 0 4px 0"><svg width="40" height="40" viewBox="0 0 40 40" style="position:absolute;left:-1px;top:-1px">
<path d="M14.6 17.4 L25.4 28.2" stroke="#3f9d74" stroke-width="1.55" fill="none"/>
<path d="M14.2 22.2 V17 H19.4" stroke="#3f9d74" stroke-width="1.95" fill="none"/>
<path d="M25.8 23.2 V28.6 H20.5" stroke="#3f9d74" stroke-width="1.95" fill="none"/>
</svg></div>
</div>
<div class="tile" style="left:490px;top:358px;width:465px;height:218px">
<div class="th">
<svg style="position:absolute;left:15.5px;top:15.5px" width="17" height="17" viewBox="0 0 17 17">
<rect x="1.3" y="1.2" width="14.2" height="14.6" fill="none" stroke="#00734a" stroke-width="1.15"/>
<path d="M1.3 4.4H15.5M1.3 9.4H15.5M1.3 12.4H15.5M4.6 4.4V15.8M9 4.4V15.8" stroke="#00734a" stroke-width=".75" fill="none" opacity=".9"/>
<path d="M1.3 6.9H15.5" stroke="#00734a" stroke-width=".7" fill="none" opacity=".45"/>
</svg>
<div class="tt" style="left:42px;top:9px">Actual Process Busy Time [s]</div>
<div class="ts" style="left:42px;top:29px">Finishing Line Nürnberg - dat files and report available Datensätze: <b>4105</b></div>
<svg style="position:absolute;left:408px;top:14px" width="10" height="20" viewBox="0 0 10 20">
<circle cx="5" cy="4.3" r="1.9" fill="none" stroke="#00734a" stroke-width="1.2"/>
<circle cx="5" cy="9.8" r="1.9" fill="none" stroke="#00734a" stroke-width="1.2"/>
<circle cx="5" cy="15.2" r="1.9" fill="none" stroke="#00734a" stroke-width="1.2"/>
</svg>
<svg style="position:absolute;left:435px;top:14px" width="20" height="20" viewBox="0 0 20 20">
<path d="M8.67 4.66 L8.81 2.85 L11.19 2.85 L11.33 4.66 L12.84 5.29 L14.22 4.10 L15.90 5.78 L14.71 7.16 L15.34 8.67 L17.15 8.81 L17.15 11.19 L15.34 11.33 L14.71 12.84 L15.90 14.22 L14.22 15.90 L12.84 14.71 L11.33 15.34 L11.19 17.15 L8.81 17.15 L8.67 15.34 L7.16 14.71 L5.78 15.90 L4.10 14.22 L5.29 12.84 L4.66 11.33 L2.85 11.19 L2.85 8.81 L4.66 8.67 L5.29 7.16 L4.10 5.78 L5.78 4.10 L7.16 5.29Z" fill="none" stroke="#00734a" stroke-width="1.3" stroke-linejoin="miter"/>
<circle cx="10" cy="10" r="2.5" fill="none" stroke="#00734a" stroke-width="0.9" opacity=".85"/>
</svg>
</div>
<svg style="position:absolute;left:0;top:0" width="465" height="218"><line x1="37" y1="68.8" x2="455.5" y2="68.8" stroke="#dddddd" stroke-width="1"/><text x="21" y="72.2" text-anchor="end" font-family="Liberation Sans" font-size="10" fill="#555">20</text><line x1="37" y1="130.5" x2="455.5" y2="130.5" stroke="#dddddd" stroke-width="1"/><text x="21" y="134.0" text-anchor="end" font-family="Liberation Sans" font-size="10" fill="#555">10</text><line x1="37" y1="191.8" x2="455.5" y2="191.8" stroke="#dddddd" stroke-width="1"/><text x="21" y="195.2" text-anchor="end" font-family="Liberation Sans" font-size="10" fill="#555">0</text><rect x="79.0" y="188.2" width="21.0" height="3.5" fill="#0082b8"/><rect x="100.0" y="190.0" width="21.0" height="1.8" fill="#0082b8"/><rect x="121.0" y="189.0" width="21.0" height="2.8" fill="#0082b8"/><rect x="142.0" y="181.2" width="21.0" height="10.5" fill="#0082b8"/><rect x="163.0" y="174.0" width="21.0" height="17.8" fill="#0082b8"/><rect x="184.0" y="137.0" width="21.0" height="54.8" fill="#0082b8"/><rect x="205.0" y="152.0" width="21.0" height="39.8" fill="#0082b8"/><rect x="226.0" y="132.0" width="21.0" height="59.8" fill="#0082b8"/><rect x="247.0" y="140.0" width="20.0" height="51.8" fill="#0082b8"/><rect x="267.0" y="105.0" width="21.0" height="86.8" fill="#0082b8"/><rect x="288.0" y="93.0" width="21.0" height="98.8" fill="#0082b8"/><rect x="309.0" y="129.0" width="21.0" height="62.8" fill="#0082b8"/><rect x="330.0" y="127.0" width="21.0" height="64.8" fill="#0082b8"/><rect x="351.0" y="168.0" width="21.0" height="23.8" fill="#0082b8"/><rect x="372.0" y="176.2" width="21.0" height="15.5" fill="#0082b8"/><rect x="393.0" y="185.0" width="21.0" height="6.8" fill="#0082b8"/><line x1="37" y1="191.75" x2="455.5" y2="191.75" stroke="#cccccc" stroke-width="1"/><text x="37.0" y="209.0" text-anchor="middle" font-family="Liberation Sans" font-size="10" fill="#555">19</text><text x="99.5" y="209.0" text-anchor="middle" font-family="Liberation Sans" font-size="10" fill="#555">39.1</text><text x="162.5" y="209.0" text-anchor="middle" font-family="Liberation Sans" font-size="10" fill="#555">59.2</text><text x="225.0" y="209.0" text-anchor="middle" font-family="Liberation Sans" font-size="10" fill="#555">79.3</text><text x="288.2" y="209.0" text-anchor="middle" font-family="Liberation Sans" font-size="10" fill="#555">99.4</text><text x="350.8" y="209.0" text-anchor="middle" font-family="Liberation Sans" font-size="10" fill="#555">119.5</text><text x="413.8" y="209.0" text-anchor="middle" font-family="Liberation Sans" font-size="10" fill="#555">139.6</text><text x="452.5" y="209.0" text-anchor="middle" font-family="Liberation Sans" font-size="10" fill="#555">%</text></svg>
<div class="xb" style="left:0px;top:179px;border-width:1px 1px 0 0;border-radius:0 5px 0 4px"><svg width="40" height="40" viewBox="0 0 40 40" style="position:absolute;left:-1px;top:-1px">
<path d="M15.1 28.2 L26 17.3" stroke="#3f9d74" stroke-width="1.55" fill="none"/>
<path d="M21 17.1 H26.4 V22.5" stroke="#3f9d74" stroke-width="1.95" fill="none"/>
<path d="M14.8 23.5 V28.7 H20" stroke="#3f9d74" stroke-width="1.95" fill="none"/>
</svg></div>
<div class="xb" style="left:425px;top:179px;border-width:1px 0 0 1px;border-radius:5px 0 4px 0"><svg width="40" height="40" viewBox="0 0 40 40" style="position:absolute;left:-1px;top:-1px">
<path d="M14.6 17.4 L25.4 28.2" stroke="#3f9d74" stroke-width="1.55" fill="none"/>
<path d="M14.2 22.2 V17 H19.4" stroke="#3f9d74" stroke-width="1.95" fill="none"/>
<path d="M25.8 23.2 V28.6 H20.5" stroke="#3f9d74" stroke-width="1.95" fill="none"/>
</svg></div>
</div>
<div class="tile" style="left:965px;top:358px;width:465px;height:218px">
<div class="th">
<svg style="position:absolute;left:15.5px;top:15.5px" width="17" height="17" viewBox="0 0 17 17">
<rect x="1.3" y="1.2" width="14.2" height="14.6" fill="none" stroke="#00734a" stroke-width="1.15"/>
<path d="M1.3 4.4H15.5M1.3 9.4H15.5M1.3 12.4H15.5M4.6 4.4V15.8M9 4.4V15.8" stroke="#00734a" stroke-width=".75" fill="none" opacity=".9"/>
<path d="M1.3 6.9H15.5" stroke="#00734a" stroke-width=".7" fill="none" opacity=".45"/>
</svg>
<div class="tt" style="left:42px;top:9px">Products [#]</div>
<div class="ts" style="left:42px;top:29px">Finishing Line Hamburg - no dat files available Datensätze: <b>7593</b></div>
<svg style="position:absolute;left:408px;top:14px" width="10" height="20" viewBox="0 0 10 20">
<circle cx="5" cy="4.3" r="1.9" fill="none" stroke="#00734a" stroke-width="1.2"/>
<circle cx="5" cy="9.8" r="1.9" fill="none" stroke="#00734a" stroke-width="1.2"/>
<circle cx="5" cy="15.2" r="1.9" fill="none" stroke="#00734a" stroke-width="1.2"/>
</svg>
<svg style="position:absolute;left:435px;top:14px" width="20" height="20" viewBox="0 0 20 20">
<path d="M8.67 4.66 L8.81 2.85 L11.19 2.85 L11.33 4.66 L12.84 5.29 L14.22 4.10 L15.90 5.78 L14.71 7.16 L15.34 8.67 L17.15 8.81 L17.15 11.19 L15.34 11.33 L14.71 12.84 L15.90 14.22 L14.22 15.90 L12.84 14.71 L11.33 15.34 L11.19 17.15 L8.81 17.15 L8.67 15.34 L7.16 14.71 L5.78 15.90 L4.10 14.22 L5.29 12.84 L4.66 11.33 L2.85 11.19 L2.85 8.81 L4.66 8.67 L5.29 7.16 L4.10 5.78 L5.78 4.10 L7.16 5.29Z" fill="none" stroke="#00734a" stroke-width="1.3" stroke-linejoin="miter"/>
<circle cx="10" cy="10" r="2.5" fill="none" stroke="#00734a" stroke-width="0.9" opacity=".85"/>
</svg>
</div>
<svg style="position:absolute;left:0;top:0" width="465" height="218"><path d="M124.50 182.00 A108 108 0 0 1 180.14 87.54 L182.18 91.21 A103.8 103.8 0 0 0 128.70 182.00Z" fill="#ff0045"/><path d="M180.14 87.54 A108 108 0 0 1 319.87 118.52 L316.48 120.99 A103.8 103.8 0 0 0 182.18 91.21Z" fill="#dede00"/><path d="M319.87 118.52 A108 108 0 0 1 340.50 182.00 L336.30 182.00 A103.8 103.8 0 0 0 316.48 120.99Z" fill="#02a82b"/><path d="M132.00 182.00 A100.5 100.5 0 0 1 333.00 182.00 L297.30 182.00 A64.8 64.8 0 0 0 167.70 182.00Z" fill="#02a82b"/><text x="232.5" y="174.8" text-anchor="middle" font-family="Liberation Sans" font-weight="bold" font-size="18" fill="#111">7593</text><text x="149.8" y="197.5" text-anchor="middle" font-family="Liberation Sans" font-size="11" fill="#555">0</text><text x="315.5" y="197.5" text-anchor="middle" font-family="Liberation Sans" font-size="11" fill="#555">2000</text></svg>
<div class="xb" style="left:0px;top:179px;border-width:1px 1px 0 0;border-radius:0 5px 0 4px"><svg width="40" height="40" viewBox="0 0 40 40" style="position:absolute;left:-1px;top:-1px">
<path d="M15.1 28.2 L26 17.3" stroke="#3f9d74" stroke-width="1.55" fill="none"/>
<path d="M21 17.1 H26.4 V22.5" stroke="#3f9d74" stroke-width="1.95" fill="none"/>
<path d="M14.8 23.5 V28.7 H20" stroke="#3f9d74" stroke-width="1.95" fill="none"/>
</svg></div>
<div class="xb" style="left:425px;top:179px;border-width:1px 0 0 1px;border-radius:5px 0 4px 0"><svg width="40" height="40" viewBox="0 0 40 40" style="position:absolute;left:-1px;top:-1px">
<path d="M14.6 17.4 L25.4 28.2" stroke="#3f9d74" stroke-width="1.55" fill="none"/>
<path d="M14.2 22.2 V17 H19.4" stroke="#3f9d74" stroke-width="1.95" fill="none"/>
<path d="M25.8 23.2 V28.6 H20.5" stroke="#3f9d74" stroke-width="1.95" fill="none"/>
</svg></div>
</div>
<div class="tile" style="left:1440px;top:358px;width:465px;height:218px">
<div class="th">
<svg style="position:absolute;left:15.5px;top:15.5px" width="17" height="17" viewBox="0 0 17 17">
<rect x="1.3" y="1.2" width="14.2" height="14.6" fill="none" stroke="#00734a" stroke-width="1.15"/>
<path d="M1.3 4.4H15.5M1.3 9.4H15.5M1.3 12.4H15.5M4.6 4.4V15.8M9 4.4V15.8" stroke="#00734a" stroke-width=".75" fill="none" opacity=".9"/>
<path d="M1.3 6.9H15.5" stroke="#00734a" stroke-width=".7" fill="none" opacity=".45"/>
</svg>
<div class="tt" style="left:42px;top:9px">Actual Process Busy Time [s]</div>
<div class="ts" style="left:42px;top:29px">Finishing Line Hamburg - no dat files available Datensätze: <b>7593</b></div>
<svg style="position:absolute;left:408px;top:14px" width="10" height="20" viewBox="0 0 10 20">
<circle cx="5" cy="4.3" r="1.9" fill="none" stroke="#00734a" stroke-width="1.2"/>
<circle cx="5" cy="9.8" r="1.9" fill="none" stroke="#00734a" stroke-width="1.2"/>
<circle cx="5" cy="15.2" r="1.9" fill="none" stroke="#00734a" stroke-width="1.2"/>
</svg>
<svg style="position:absolute;left:435px;top:14px" width="20" height="20" viewBox="0 0 20 20">
<path d="M8.67 4.66 L8.81 2.85 L11.19 2.85 L11.33 4.66 L12.84 5.29 L14.22 4.10 L15.90 5.78 L14.71 7.16 L15.34 8.67 L17.15 8.81 L17.15 11.19 L15.34 11.33 L14.71 12.84 L15.90 14.22 L14.22 15.90 L12.84 14.71 L11.33 15.34 L11.19 17.15 L8.81 17.15 L8.67 15.34 L7.16 14.71 L5.78 15.90 L4.10 14.22 L5.29 12.84 L4.66 11.33 L2.85 11.19 L2.85 8.81 L4.66 8.67 L5.29 7.16 L4.10 5.78 L5.78 4.10 L7.16 5.29Z" fill="none" stroke="#00734a" stroke-width="1.3" stroke-linejoin="miter"/>
<circle cx="10" cy="10" r="2.5" fill="none" stroke="#00734a" stroke-width="0.9" opacity=".85"/>
</svg>
</div>
<svg style="position:absolute;left:0;top:0" width="465" height="218"><line x1="37.2" y1="69.1" x2="455.8" y2="69.1" stroke="#dddddd" stroke-width="1"/><text x="21.200000000000003" y="72.6" text-anchor="end" font-family="Liberation Sans" font-size="10" fill="#555">30</text><line x1="37.2" y1="110.7" x2="455.8" y2="110.7" stroke="#dddddd" stroke-width="1"/><text x="21.200000000000003" y="114.2" text-anchor="end" font-family="Liberation Sans" font-size="10" fill="#555">20</text><line x1="37.2" y1="150.7" x2="455.8" y2="150.7" stroke="#dddddd" stroke-width="1"/><text x="21.200000000000003" y="154.2" text-anchor="end" font-family="Liberation Sans" font-size="10" fill="#555">10</text><line x1="37.2" y1="191.5" x2="455.8" y2="191.5" stroke="#dddddd" stroke-width="1"/><text x="21.200000000000003" y="195.0" text-anchor="end" font-family="Liberation Sans" font-size="10" fill="#555">0</text><rect x="58.0" y="189.3" width="21.0" height="2.2" fill="#0082b8"/><rect x="79.0" y="184.7" width="21.0" height="6.8" fill="#0082b8"/><rect x="100.0" y="160.5" width="21.0" height="31.0" fill="#0082b8"/><rect x="121.0" y="139.5" width="21.0" height="52.0" fill="#0082b8"/><rect x="142.0" y="123.4" width="21.0" height="68.1" fill="#0082b8"/><rect x="163.0" y="102.5" width="21.0" height="89.0" fill="#0082b8"/><rect x="184.0" y="116.6" width="21.0" height="74.9" fill="#0082b8"/><rect x="205.0" y="136.7" width="21.0" height="54.8" fill="#0082b8"/><rect x="226.0" y="167.6" width="21.0" height="23.9" fill="#0082b8"/><rect x="247.0" y="186.7" width="20.0" height="4.8" fill="#0082b8"/><line x1="37.2" y1="191.5" x2="455.8" y2="191.5" stroke="#cccccc" stroke-width="1"/><text x="37.0" y="209.0" text-anchor="middle" font-family="Liberation Sans" font-size="10" fill="#555">24.27</text><text x="99.8" y="209.0" text-anchor="middle" font-family="Liberation Sans" font-size="10" fill="#555">62.22</text><text x="162.8" y="209.0" text-anchor="middle" font-family="Liberation Sans" font-size="10" fill="#555">100.16</text><text x="225.3" y="209.0" text-anchor="middle" font-family="Liberation Sans" font-size="10" fill="#555">138.11</text><text x="288.1" y="209.0" text-anchor="middle" font-family="Liberation Sans" font-size="10" fill="#555">176.05</text><text x="351.2" y="209.0" text-anchor="middle" font-family="Liberation Sans" font-size="10" fill="#555">214</text><text x="413.7" y="209.0" text-anchor="middle" font-family="Liberation Sans" font-size="10" fill="#555">251.94</text><text x="452.8" y="209.0" text-anchor="middle" font-family="Liberation Sans" font-size="10" fill="#555">%</text></svg>
<div class="xb" style="left:0px;top:179px;border-width:1px 1px 0 0;border-radius:0 5px 0 4px"><svg width="40" height="40" viewBox="0 0 40 40" style="position:absolute;left:-1px;top:-1px">
<path d="M15.1 28.2 L26 17.3" stroke="#3f9d74" stroke-width="1.55" fill="none"/>
<path d="M21 17.1 H26.4 V22.5" stroke="#3f9d74" stroke-width="1.95" fill="none"/>
<path d="M14.8 23.5 V28.7 H20" stroke="#3f9d74" stroke-width="1.95" fill="none"/>
</svg></div>
<div class="xb" style="left:425px;top:179px;border-width:1px 0 0 1px;border-radius:5px 0 4px 0"><svg width="40" height="40" viewBox="0 0 40 40" style="position:absolute;left:-1px;top:-1px">
<path d="M14.6 17.4 L25.4 28.2" stroke="#3f9d74" stroke-width="1.55" fill="none"/>
<path d="M14.2 22.2 V17 H19.4" stroke="#3f9d74" stroke-width="1.95" fill="none"/>
<path d="M25.8 23.2 V28.6 H20.5" stroke="#3f9d74" stroke-width="1.95" fill="none"/>
</svg></div>
</div>
<div class="tile" style="left:15px;top:586px;width:307px;height:444px">
<div class="th">
<svg style="position:absolute;left:15.5px;top:15.5px" width="17" height="17" viewBox="0 0 17 17">
<rect x="1.3" y="1.2" width="14.2" height="14.6" fill="none" stroke="#00734a" stroke-width="1.15"/>
<path d="M1.3 4.4H15.5M1.3 9.4H15.5M1.3 12.4H15.5M4.6 4.4V15.8M9 4.4V15.8" stroke="#00734a" stroke-width=".75" fill="none" opacity=".9"/>
<path d="M1.3 6.9H15.5" stroke="#00734a" stroke-width=".7" fill="none" opacity=".45"/>
</svg>
<div class="tt" style="left:42px;top:6px;width:187px;white-space:normal">Operating efficiency trend [%]</div>
<svg style="position:absolute;left:250px;top:14px" width="10" height="20" viewBox="0 0 10 20">
<circle cx="5" cy="4.3" r="1.9" fill="none" stroke="#00734a" stroke-width="1.2"/>
<circle cx="5" cy="9.8" r="1.9" fill="none" stroke="#00734a" stroke-width="1.2"/>
<circle cx="5" cy="15.2" r="1.9" fill="none" stroke="#00734a" stroke-width="1.2"/>
</svg>
<svg style="position:absolute;left:277px;top:14px" width="20" height="20" viewBox="0 0 20 20">
<path d="M8.67 4.66 L8.81 2.85 L11.19 2.85 L11.33 4.66 L12.84 5.29 L14.22 4.10 L15.90 5.78 L14.71 7.16 L15.34 8.67 L17.15 8.81 L17.15 11.19 L15.34 11.33 L14.71 12.84 L15.90 14.22 L14.22 15.90 L12.84 14.71 L11.33 15.34 L11.19 17.15 L8.81 17.15 L8.67 15.34 L7.16 14.71 L5.78 15.90 L4.10 14.22 L5.29 12.84 L4.66 11.33 L2.85 11.19 L2.85 8.81 L4.66 8.67 L5.29 7.16 L4.10 5.78 L5.78 4.10 L7.16 5.29Z" fill="none" stroke="#00734a" stroke-width="1.3" stroke-linejoin="miter"/>
<circle cx="10" cy="10" r="2.5" fill="none" stroke="#00734a" stroke-width="0.9" opacity=".85"/>
</svg>
</div>
<svg style="position:absolute;left:0;top:0" width="307" height="444"><line x1="37.6" y1="106.1" x2="296.8" y2="106.1" stroke="#dddddd" stroke-width="1"/><text x="21.5" y="109.1" text-anchor="end" font-family="Liberation Sans" font-size="10" fill="#555">85</text><line x1="37.6" y1="154.7" x2="296.8" y2="154.7" stroke="#dddddd" stroke-width="1"/><text x="21.5" y="157.7" text-anchor="end" font-family="Liberation Sans" font-size="10" fill="#555">80</text><line x1="37.6" y1="203.3" x2="296.8" y2="203.3" stroke="#dddddd" stroke-width="1"/><text x="21.5" y="206.3" text-anchor="end" font-family="Liberation Sans" font-size="10" fill="#555">75</text><line x1="37.6" y1="252.0" x2="296.8" y2="252.0" stroke="#dddddd" stroke-width="1"/><text x="21.5" y="255.0" text-anchor="end" font-family="Liberation Sans" font-size="10" fill="#555">70</text><line x1="37.6" y1="300.6" x2="296.8" y2="300.6" stroke="#dddddd" stroke-width="1"/><text x="21.5" y="303.6" text-anchor="end" font-family="Liberation Sans" font-size="10" fill="#555">65</text><line x1="37.6" y1="349.3" x2="296.8" y2="349.3" stroke="#dddddd" stroke-width="1"/><text x="21.5" y="352.3" text-anchor="end" font-family="Liberation Sans" font-size="10" fill="#555">60</text><line x1="37.6" y1="397.8" x2="296.8" y2="397.8" stroke="#dddddd" stroke-width="1"/><text x="21.5" y="400.8" text-anchor="end" font-family="Liberation Sans" font-size="10" fill="#555">55</text><line x1="37.6" y1="418.5" x2="296.8" y2="418.5" stroke="#cccccc" stroke-width="1"/><line x1="38.1" y1="418" x2="38.1" y2="426" stroke="#cccccc" stroke-width="1"/><text x="37.6" y="437.0" text-anchor="middle" font-family="Liberation Sans" font-size="10" fill="#555">0</text><line x1="100.9" y1="418" x2="100.9" y2="426" stroke="#cccccc" stroke-width="1"/><text x="100.4" y="437.0" text-anchor="middle" font-family="Liberation Sans" font-size="10" fill="#555">1k</text><line x1="163.7" y1="418" x2="163.7" y2="426" stroke="#cccccc" stroke-width="1"/><text x="163.2" y="437.0" text-anchor="middle" font-family="Liberation Sans" font-size="10" fill="#555">2k</text><line x1="226.9" y1="418" x2="226.9" y2="426" stroke="#cccccc" stroke-width="1"/><text x="226.4" y="437.0" text-anchor="middle" font-family="Liberation Sans" font-size="10" fill="#555">3k</text><line x1="290.2" y1="418" x2="290.2" y2="426" stroke="#cccccc" stroke-width="1"/><text x="289.7" y="437.0" text-anchor="middle" font-family="Liberation Sans" font-size="10" fill="#555">4k</text><path d="M38.5 94.3V238.1M39.5 61.7V248.7M40.5 90.0V234.7M41.5 117.7V243.7M42.5 81.2V205.3M43.5 127.8V263.3M44.5 128.2V202.6M45.5 76.8V275.4M46.5 58.1V175.5M47.5 79.5V231.1M48.5 120.5V275.7M49.5 88.5V275.1M50.5 117.1V267.4M51.5 137.0V248.9M52.5 95.2V197.2M53.5 89.2V227.8M54.5 90.6V224.8M55.5 93.9V265.1M56.5 57.1V169.6M57.5 67.0V218.3M58.5 105.5V268.2M59.5 107.8V274.9M60.5 71.9V255.2M61.5 66.6V256.4M62.5 59.6V196.4M63.5 144.0V269.3M64.5 62.6V248.3M65.5 58.2V255.4M66.5 130.5V229.3M67.5 71.1V265.6M68.5 128.6V261.0M69.5 59.2V210.8M70.5 124.9V267.2M71.5 126.9V275.1M72.5 69.8V271.0M73.5 86.2V250.6M74.5 117.1V214.8M75.5 123.4V227.4M76.5 125.1V253.2M77.5 114.9V265.6M78.5 58.8V203.6M79.5 106.5V189.9M80.5 115.1V255.7M81.5 66.1V227.6M82.5 127.0V170.9M83.5 114.8V266.4M84.5 71.4V261.3M85.5 107.1V274.8M86.5 128.3V235.3M87.5 112.0V232.9M88.5 100.7V250.0M89.5 59.5V246.8M90.5 85.1V193.1M91.5 117.9V272.1M92.5 62.7V201.3M93.5 111.4V270.4M94.5 73.7V180.0M95.5 116.5V178.2M96.5 127.8V254.2M97.5 178.4V276.1M98.5 225.7V238.5M99.5 199.9V249.8M100.5 197.7V244.6M101.5 158.7V267.8M102.5 207.6V249.1M103.5 221.5V270.6M104.5 162.8V243.3M105.5 156.7V268.4M106.5 124.0V271.7M107.5 229.1V268.8M108.5 175.6V278.0M109.5 207.5V264.5M110.5 161.4V274.9M111.5 185.2V241.6M112.5 117.4V251.9M113.5 148.3V255.0M114.5 212.1V279.1M115.5 228.9V240.8M116.5 147.3V238.5M117.5 228.4V252.8M118.5 171.5V248.7M119.5 190.3V236.9M120.5 220.6V256.7M121.5 143.3V241.2M122.5 143.3V249.8M123.5 137.3V240.6M124.5 102.4V221.6M125.5 63.2V192.3M126.5 97.0V205.7M127.5 65.5V236.5M128.5 81.5V256.8M129.5 84.5V232.0M130.5 129.5V227.9M131.5 57.4V190.8M132.5 74.4V256.3M133.5 73.9V235.5M134.5 95.2V197.9M135.5 129.1V212.0M136.5 137.0V232.9M137.5 92.1V268.1M138.5 76.4V245.3M139.5 82.3V183.6M140.5 110.8V275.7M141.5 106.7V222.6M142.5 115.9V271.4M143.5 62.8V225.1M144.5 95.1V188.7M145.5 104.5V224.3M146.5 116.3V252.3M147.5 69.2V184.7M148.5 64.5V256.6M149.5 84.5V262.3M150.5 122.8V245.4M151.5 67.2V196.1M152.5 75.6V178.2M153.5 108.9V271.4M154.5 94.4V265.3M155.5 114.7V253.9M156.5 81.5V245.7M157.5 105.5V197.8M158.5 58.1V250.1M159.5 130.3V275.5M160.5 64.9V275.4M161.5 75.7V236.8M162.5 106.0V205.5M163.5 139.0V272.8M164.5 94.1V275.6M165.5 133.4V270.2M166.5 212.0V278.6M167.5 155.1V261.1M168.5 155.0V252.0M169.5 135.8V238.7M170.5 149.0V271.9M171.5 172.3V272.8M172.5 230.0V260.0M173.5 145.8V272.8M174.5 195.8V265.5M175.5 147.7V257.8M176.5 156.7V247.5M177.5 181.6V246.0M178.5 125.2V276.8M179.5 122.4V249.0M180.5 213.4V260.8M181.5 155.5V240.8M182.5 183.5V255.7M183.5 128.1V245.8M184.5 121.2V260.3M185.5 152.7V271.6M186.5 145.0V244.8M187.5 153.7V249.2M188.5 203.0V241.2M189.5 117.4V237.9M190.5 165.3V246.0M191.5 190.1V240.8M192.5 130.6V265.4M193.5 129.2V251.3M194.5 86.9V209.2M195.5 91.6V275.6M196.5 69.0V275.0M197.5 69.6V271.2M198.5 103.8V206.1M199.5 122.3V272.3M200.5 89.4V216.0M201.5 67.0V221.0M202.5 60.3V245.9M203.5 60.1V274.5M204.5 114.0V242.0M205.5 107.7V215.2M206.5 80.5V242.5M207.5 66.8V238.1M208.5 105.8V256.9M209.5 66.7V187.2M210.5 115.3V195.8M211.5 58.9V242.3M212.5 85.2V269.8M213.5 87.9V244.7M214.5 82.9V275.6M215.5 58.9V243.2M216.5 98.4V204.0M217.5 86.0V246.0M218.5 76.9V275.0M219.5 87.7V253.9M220.5 59.6V183.1M221.5 109.6V247.9M222.5 123.9V252.0M223.5 68.6V187.2M224.5 92.4V262.2M225.5 117.0V230.8M226.5 61.6V273.1M227.5 71.0V275.6M228.5 116.7V268.3M229.5 77.2V261.8M230.5 102.1V230.5M231.5 126.4V214.9M232.5 124.3V243.9M233.5 198.4V272.0M234.5 166.1V261.5M235.5 183.7V262.5M236.5 166.2V273.6M237.5 204.1V253.0M238.5 154.1V257.4M239.5 131.1V253.8M240.5 130.5V270.4M241.5 142.9V245.2M242.5 125.6V266.8M243.5 190.7V240.2M244.5 202.4V236.9M245.5 127.2V274.8M246.5 199.8V248.8M247.5 197.3V276.4M248.5 133.1V262.2M249.5 137.6V275.1M250.5 180.5V250.6M251.5 228.9V271.8M252.5 149.3V240.7M253.5 118.6V275.6M254.5 168.8V247.4M255.5 169.2V250.6M256.5 205.9V277.5M257.5 216.5V279.0M258.5 163.7V258.1M259.5 161.8V274.2M260.5 206.5V271.7M261.5 67.0V170.7M262.5 61.5V274.2M263.5 132.0V178.0M264.5 93.5V209.8M265.5 104.5V248.6M266.5 89.5V252.3M267.5 83.2V275.7M268.5 76.2V196.9M269.5 118.0V249.9M270.5 73.7V254.7M271.5 116.6V271.6M272.5 89.7V275.7M273.5 63.6V203.9M274.5 76.0V194.1M275.5 81.2V254.8M276.5 83.3V244.6M277.5 58.0V203.4M278.5 110.6V185.3M279.5 73.3V207.7M280.5 68.7V254.7M281.5 63.4V190.8M282.5 76.7V209.4M283.5 71.9V254.7M284.5 74.8V274.8M285.5 103.2V248.4M286.5 140.9V259.1M287.5 80.6V230.0M288.5 113.0V179.2M289.5 78.6V260.6M290.5 79.1V236.9M291.5 88.2V256.2M292.5 57.0V227.5M293.5 76.2V210.2M294.5 58.2V275.6M295.5 82.2V213.7M296.5 110.7V255.1" fill="none" stroke="#62df72" stroke-width="1.05"/><path d="M40.4 212.6V418.0M58.3 212.6V343.8M63.9 212.6V300.1M99.3 212.6V407.0M109.4 212.6V418.0M133.6 212.6V343.8M137.3 212.6V300.1M166.8 212.6V407.0M177.6 212.6V418.0M201.8 212.6V343.8M206.3 212.6V300.1M235.0 212.6V407.0M246.1 212.6V418.0M270.4 212.6V343.8M274.0 212.6V300.1" fill="none" stroke="#62df72" stroke-width="1.2"/></svg>
<div class="xb" style="left:0px;top:405px;border-width:1px 1px 0 0;border-radius:0 5px 0 4px"><svg width="40" height="40" viewBox="0 0 40 40" style="position:absolute;left:-1px;top:-1px">
<path d="M15.1 28.2 L26 17.3" stroke="#3f9d74" stroke-width="1.55" fill="none"/>
<path d="M21 17.1 H26.4 V22.5" stroke="#3f9d74" stroke-width="1.95" fill="none"/>
<path d="M14.8 23.5 V28.7 H20" stroke="#3f9d74" stroke-width="1.95" fill="none"/>
</svg></div>
<div class="xb" style="left:267px;top:405px;border-width:1px 0 0 1px;border-radius:5px 0 4px 0"><svg width="40" height="40" viewBox="0 0 40 40" style="position:absolute;left:-1px;top:-1px">
<path d="M14.6 17.4 L25.4 28.2" stroke="#3f9d74" stroke-width="1.55" fill="none"/>
<path d="M14.2 22.2 V17 H19.4" stroke="#3f9d74" stroke-width="1.95" fill="none"/>
<path d="M25.8 23.2 V28.6 H20.5" stroke="#3f9d74" stroke-width="1.95" fill="none"/>
</svg></div>
</div>
<div class="tile" style="left:965px;top:586px;width:307px;height:444px">
<div class="th">
<svg style="position:absolute;left:15.5px;top:15.5px" width="17" height="17" viewBox="0 0 17 17">
<rect x="1.3" y="1.2" width="14.2" height="14.6" fill="none" stroke="#00734a" stroke-width="1.15"/>
<path d="M1.3 4.4H15.5M1.3 9.4H15.5M1.3 12.4H15.5M4.6 4.4V15.8M9 4.4V15.8" stroke="#00734a" stroke-width=".75" fill="none" opacity=".9"/>
<path d="M1.3 6.9H15.5" stroke="#00734a" stroke-width=".7" fill="none" opacity=".45"/>
</svg>
<div class="tt" style="left:42px;top:6px;width:187px;white-space:normal">Operating efficiency trend [%]</div>
<svg style="position:absolute;left:250px;top:14px" width="10" height="20" viewBox="0 0 10 20">
<circle cx="5" cy="4.3" r="1.9" fill="none" stroke="#00734a" stroke-width="1.2"/>
<circle cx="5" cy="9.8" r="1.9" fill="none" stroke="#00734a" stroke-width="1.2"/>
<circle cx="5" cy="15.2" r="1.9" fill="none" stroke="#00734a" stroke-width="1.2"/>
</svg>
<svg style="position:absolute;left:277px;top:14px" width="20" height="20" viewBox="0 0 20 20">
<path d="M8.67 4.66 L8.81 2.85 L11.19 2.85 L11.33 4.66 L12.84 5.29 L14.22 4.10 L15.90 5.78 L14.71 7.16 L15.34 8.67 L17.15 8.81 L17.15 11.19 L15.34 11.33 L14.71 12.84 L15.90 14.22 L14.22 15.90 L12.84 14.71 L11.33 15.34 L11.19 17.15 L8.81 17.15 L8.67 15.34 L7.16 14.71 L5.78 15.90 L4.10 14.22 L5.29 12.84 L4.66 11.33 L2.85 11.19 L2.85 8.81 L4.66 8.67 L5.29 7.16 L4.10 5.78 L5.78 4.10 L7.16 5.29Z" fill="none" stroke="#00734a" stroke-width="1.3" stroke-linejoin="miter"/>
<circle cx="10" cy="10" r="2.5" fill="none" stroke="#00734a" stroke-width="0.9" opacity=".85"/>
</svg>
</div>
<svg style="position:absolute;left:0;top:0" width="307" height="444"><line x1="36.39999999999998" y1="93.4" x2="297" y2="93.4" stroke="#dddddd" stroke-width="1"/><text x="21.700000000000045" y="96.4" text-anchor="end" font-family="Liberation Sans" font-size="10" fill="#555">80</text><line x1="36.39999999999998" y1="147.3" x2="297" y2="147.3" stroke="#dddddd" stroke-width="1"/><text x="21.700000000000045" y="150.3" text-anchor="end" font-family="Liberation Sans" font-size="10" fill="#555">70</text><line x1="36.39999999999998" y1="201.2" x2="297" y2="201.2" stroke="#dddddd" stroke-width="1"/><text x="21.700000000000045" y="204.2" text-anchor="end" font-family="Liberation Sans" font-size="10" fill="#555">60</text><line x1="36.39999999999998" y1="255.1" x2="297" y2="255.1" stroke="#dddddd" stroke-width="1"/><text x="21.700000000000045" y="258.1" text-anchor="end" font-family="Liberation Sans" font-size="10" fill="#555">50</text><line x1="36.39999999999998" y1="309.0" x2="297" y2="309.0" stroke="#dddddd" stroke-width="1"/><text x="21.700000000000045" y="312.0" text-anchor="end" font-family="Liberation Sans" font-size="10" fill="#555">40</text><line x1="36.39999999999998" y1="362.9" x2="297" y2="362.9" stroke="#dddddd" stroke-width="1"/><text x="21.700000000000045" y="365.9" text-anchor="end" font-family="Liberation Sans" font-size="10" fill="#555">30</text><line x1="36.39999999999998" y1="416.8" x2="297" y2="416.8" stroke="#dddddd" stroke-width="1"/><text x="21.700000000000045" y="419.8" text-anchor="end" font-family="Liberation Sans" font-size="10" fill="#555">20</text><line x1="36.39999999999998" y1="418.5" x2="297" y2="418.5" stroke="#cccccc" stroke-width="1"/><line x1="36.9" y1="418" x2="36.9" y2="426" stroke="#cccccc" stroke-width="1"/><text x="36.4" y="437.0" text-anchor="middle" font-family="Liberation Sans" font-size="10" fill="#555">0</text><line x1="123.3" y1="418" x2="123.3" y2="426" stroke="#cccccc" stroke-width="1"/><text x="122.8" y="437.0" text-anchor="middle" font-family="Liberation Sans" font-size="10" fill="#555">2.5k</text><line x1="209.3" y1="418" x2="209.3" y2="426" stroke="#cccccc" stroke-width="1"/><text x="208.8" y="437.0" text-anchor="middle" font-family="Liberation Sans" font-size="10" fill="#555">5k</text><line x1="288.1" y1="418" x2="288.1" y2="426" stroke="#cccccc" stroke-width="1"/><text x="287.6" y="437.0" text-anchor="middle" font-family="Liberation Sans" font-size="10" fill="#555">7.5k</text><path d="M36.5 151.9V203.8M37.5 158.0V164.8M38.5 134.1V160.1M39.5 117.5V184.9M40.5 113.8V187.9M41.5 115.4V162.9M42.5 138.9V217.7M43.5 128.6V224.6M44.5 105.8V193.0M45.5 115.7V210.0M46.5 113.4V210.1M47.5 113.5V227.0M48.5 140.6V218.5M49.5 119.8V165.4M50.5 117.9V158.4M51.5 107.3V164.8M52.5 122.8V159.6M53.5 136.6V162.4M54.5 118.8V159.2M55.5 105.9V221.2M56.5 113.0V215.5M57.5 142.5V220.6M58.5 131.6V198.1M59.5 137.9V200.7M60.5 115.6V157.8M61.5 96.1V213.2M62.5 128.1V174.0M63.5 122.2V211.0M64.5 114.1V188.3M65.5 111.0V216.4M66.5 125.3V164.0M67.5 113.6V224.4M68.5 133.5V186.0M69.5 147.0V223.7M70.5 150.5V191.3M71.5 129.6V196.5M72.5 143.3V177.0M73.5 121.4V220.9M74.5 106.9V175.2M75.5 134.0V211.9M76.5 115.1V183.8M77.5 100.3V191.4M78.5 98.1V200.1M79.5 128.2V167.1M80.5 153.3V190.3M81.5 133.0V209.1M82.5 120.8V214.8M83.5 122.1V208.8M84.5 110.2V210.2M85.5 139.6V178.4M86.5 142.6V179.6M87.5 121.6V162.2M88.5 104.6V172.6M89.5 130.4V202.1M90.5 99.8V212.5M91.5 125.1V204.6M92.5 132.0V216.0M93.5 120.0V192.0M94.5 106.0V217.2M95.5 100.0V210.3M96.5 139.6V191.8M97.5 119.9V183.9M98.5 115.0V191.6M99.5 113.8V223.2M100.5 103.6V223.0M101.5 116.5V176.9M102.5 118.7V214.4M103.5 109.6V175.5M104.5 127.4V160.0M105.5 117.6V192.3M106.5 108.6V164.1M107.5 118.9V182.8M108.5 101.1V170.3M109.5 90.8V184.7M110.5 108.8V172.7M111.5 124.5V219.2M112.5 105.8V203.8M113.5 139.2V200.3M114.5 133.2V224.5M115.5 143.2V184.2M116.5 122.8V224.3M117.5 125.2V164.5M118.5 153.9V216.7M119.5 153.1V179.0M120.5 134.5V216.7M121.5 144.2V176.0M122.5 140.4V171.5M123.5 135.2V166.2M124.5 110.8V191.5M125.5 98.0V214.3M126.5 131.0V172.7M127.5 132.5V193.8M128.5 131.4V183.5M129.5 147.7V196.9M130.5 134.9V179.3M131.5 128.6V218.5M132.5 138.8V167.6M133.5 127.1V158.1M134.5 136.8V218.9M135.5 123.6V171.2M136.5 102.8V223.2M137.5 125.4V222.3M138.5 126.7V161.0M139.5 116.1V208.8M140.5 109.1V164.0M141.5 134.7V215.2M142.5 126.0V218.5M143.5 112.1V208.3M144.5 144.4V197.3M145.5 123.5V181.3M146.5 145.6V197.7M147.5 104.5V183.7M148.5 143.7V179.6M149.5 143.6V198.0M150.5 148.3V172.9M151.5 145.9V209.7M152.5 138.0V209.1M153.5 139.3V182.8M154.5 146.6V178.0M155.5 134.4V190.4M156.5 120.0V170.8M157.5 148.8V222.4M158.5 121.6V217.0M159.5 123.7V188.2M160.5 148.9V218.5M161.5 153.4V223.7M162.5 115.6V194.1M163.5 110.6V171.2M164.5 128.3V201.2M165.5 151.6V180.3M166.5 106.4V183.3M167.5 120.6V206.9M168.5 161.4V227.1M169.5 164.8V179.1M170.5 142.5V223.8M171.5 133.1V196.9M172.5 156.3V224.9M173.5 139.3V199.2M174.5 135.6V221.3M175.5 126.1V221.2M176.5 170.9V194.8M177.5 155.1V168.4M178.5 164.1V226.0M179.5 142.1V170.3M180.5 149.1V196.0M181.5 160.0V163.6M182.5 141.3V226.1M183.5 106.8V165.5M184.5 130.4V170.5M185.5 110.9V201.6M186.5 126.8V131.7M187.5 84.3V185.5M188.5 80.5V179.9M189.5 81.9V205.3M190.5 104.9V197.2M191.5 103.1V195.1M192.5 100.6V165.6M193.5 103.0V204.0M194.5 95.4V134.0M195.5 91.4V177.7M196.5 85.8V150.5M197.5 80.9V131.1M198.5 70.1V177.9M199.5 88.7V138.5M200.5 91.7V176.1M201.5 78.3V203.0M202.5 73.7V152.5M203.5 79.9V185.7M204.5 91.9V198.5M205.5 96.7V178.8M206.5 113.6V168.9M207.5 116.5V178.9M208.5 121.0V138.0M209.5 80.9V141.6M210.5 89.8V191.7M211.5 81.4V138.6M212.5 104.8V198.5M213.5 90.8V206.1M214.5 108.4V184.2M215.5 114.5V145.8M216.5 108.9V164.2M217.5 127.5V139.0M218.5 115.5V136.1M219.5 81.2V192.8M220.5 94.0V139.2M221.5 104.2V182.0M222.5 104.4V140.6M223.5 80.3V160.5M224.5 99.0V203.3M225.5 111.6V185.1M226.5 77.8V154.1M227.5 103.2V135.8M228.5 106.7V191.6M229.5 105.3V193.5M230.5 117.2V157.9M231.5 91.7V158.2M232.5 75.5V191.2M233.5 91.6V157.8M234.5 102.4V200.8M235.5 76.8V168.7M236.5 94.0V163.1M237.5 108.3V146.8M238.5 121.9V150.6M239.5 119.5V167.1M240.5 112.7V131.6M241.5 123.4V151.1M242.5 104.5V170.9M243.5 112.5V159.5M244.5 105.7V148.4M245.5 98.3V143.4M246.5 87.9V134.6M247.5 103.8V195.7M248.5 97.3V175.5M249.5 79.7V147.8M250.5 102.2V191.7M251.5 94.3V204.2M252.5 87.7V165.2M253.5 80.3V196.6M254.5 112.3V175.9M255.5 107.4V147.2M256.5 113.5V165.5M257.5 95.8V190.5M258.5 114.4V203.8M259.5 108.9V168.9M260.5 109.7V200.9M261.5 90.5V189.3M262.5 106.7V144.5M263.5 92.6V177.7M264.5 104.7V133.1M265.5 119.8V150.2M266.5 86.9V174.3M267.5 87.9V190.3M268.5 80.1V179.1M269.5 100.4V201.6M270.5 111.6V150.0M271.5 94.3V189.4M272.5 96.4V173.9M273.5 78.1V183.3M274.5 66.0V203.9M275.5 87.6V202.8M276.5 97.2V141.8M277.5 86.6V173.8M278.5 92.5V180.0M279.5 85.7V182.5M280.5 105.8V195.8M281.5 116.7V173.4M282.5 112.4V131.2M283.5 88.2V192.9M284.5 104.3V155.8M285.5 108.1V205.1M286.5 117.8V179.1M287.5 81.0V188.3M288.5 101.7V135.9M289.5 100.4V153.2M290.5 85.5V184.4M291.5 103.2V140.3M292.5 102.4V169.4M293.5 119.7V190.5M294.5 129.9V163.4M295.5 130.6V176.7M296.5 111.0V154.6M297.5 108.7V157.8M298.5 120.4V187.5" fill="none" stroke="#1a8bbe" stroke-width="1.05"/><path d="M39.0 168.4V222.3M43.0 168.4V243.8M66.4 168.4V276.2M68.5 168.4V303.1M80.0 168.4V251.9M91.0 168.4V238.4M114.0 168.4V230.3M141.0 168.4V249.2M151.8 168.4V300.4M162.0 168.4V227.6M171.8 168.4V238.4M200.8 168.4V260.0M248.0 168.4V227.6M256.0 168.4V246.5M270.7 168.4V416.3" fill="none" stroke="#1a8bbe" stroke-width="1.2"/></svg>
<div class="xb" style="left:0px;top:405px;border-width:1px 1px 0 0;border-radius:0 5px 0 4px"><svg width="40" height="40" viewBox="0 0 40 40" style="position:absolute;left:-1px;top:-1px">
<path d="M15.1 28.2 L26 17.3" stroke="#3f9d74" stroke-width="1.55" fill="none"/>
<path d="M21 17.1 H26.4 V22.5" stroke="#3f9d74" stroke-width="1.95" fill="none"/>
<path d="M14.8 23.5 V28.7 H20" stroke="#3f9d74" stroke-width="1.95" fill="none"/>
</svg></div>
<div class="xb" style="left:267px;top:405px;border-width:1px 0 0 1px;border-radius:5px 0 4px 0"><svg width="40" height="40" viewBox="0 0 40 40" style="position:absolute;left:-1px;top:-1px">
<path d="M14.6 17.4 L25.4 28.2" stroke="#3f9d74" stroke-width="1.55" fill="none"/>
<path d="M14.2 22.2 V17 H19.4" stroke="#3f9d74" stroke-width="1.95" fill="none"/>
<path d="M25.8 23.2 V28.6 H20.5" stroke="#3f9d74" stroke-width="1.95" fill="none"/>
</svg></div>
</div>
<div class="tile" style="left:332px;top:586px;width:623px;height:444px">
<div class="th">
<svg style="position:absolute;left:15.5px;top:15.5px" width="17" height="17" viewBox="0 0 17 17">
<rect x="1.3" y="1.2" width="14.2" height="14.6" fill="none" stroke="#00734a" stroke-width="1.15"/>
<path d="M1.3 4.4H15.5M1.3 9.4H15.5M1.3 12.4H15.5M4.6 4.4V15.8M9 4.4V15.8" stroke="#00734a" stroke-width=".75" fill="none" opacity=".9"/>
<path d="M1.3 6.9H15.5" stroke="#00734a" stroke-width=".7" fill="none" opacity=".45"/>
</svg>
<div class="tt" style="left:42px;top:9px">Last Product</div>
<div class="ts" style="left:42px;top:29px">Finishing Line Nürnberg - dat files and report available Datensätze: <b>4105</b></div>
<svg style="position:absolute;left:566px;top:14px" width="10" height="20" viewBox="0 0 10 20">
<circle cx="5" cy="4.3" r="1.9" fill="none" stroke="#00734a" stroke-width="1.2"/>
<circle cx="5" cy="9.8" r="1.9" fill="none" stroke="#00734a" stroke-width="1.2"/>
<circle cx="5" cy="15.2" r="1.9" fill="none" stroke="#00734a" stroke-width="1.2"/>
</svg>
<svg style="position:absolute;left:593px;top:14px" width="20" height="20" viewBox="0 0 20 20">
<path d="M8.67 4.66 L8.81 2.85 L11.19 2.85 L11.33 4.66 L12.84 5.29 L14.22 4.10 L15.90 5.78 L14.71 7.16 L15.34 8.67 L17.15 8.81 L17.15 11.19 L15.34 11.33 L14.71 12.84 L15.90 14.22 L14.22 15.90 L12.84 14.71 L11.33 15.34 L11.19 17.15 L8.81 17.15 L8.67 15.34 L7.16 14.71 L5.78 15.90 L4.10 14.22 L5.29 12.84 L4.66 11.33 L2.85 11.19 L2.85 8.81 L4.66 8.67 L5.29 7.16 L4.10 5.78 L5.78 4.10 L7.16 5.29Z" fill="none" stroke="#00734a" stroke-width="1.3" stroke-linejoin="miter"/>
<circle cx="10" cy="10" r="2.5" fill="none" stroke="#00734a" stroke-width="0.9" opacity=".85"/>
</svg>
</div>
<div class="card" style="left:5px;top:54px;width:146px;height:97px"><div class="cl">Coil_ID</div><div class="cs">Letzter Wert</div><div class="cv">38394</div></div>
<div class="card" style="left:161px;top:54px;width:145px;height:97px"><div class="cl">No</div><div class="cs">Letzter Wert</div><div class="cv">001</div></div>
<div class="card" style="left:316px;top:54px;width:302px;height:97px"><div class="cl">Material_TXT</div><div class="cs">Letzter Wert</div><div class="cv">5 CrMo 7-9</div></div>
<div class="card" style="left:5px;top:162px;width:146px;height:62px"><div class="cl">Thickness</div><div class="cs">Letzter Wert</div><div class="cm" style="right:8px;top:40px">30.62</div></div>
<div class="card" style="left:161px;top:162px;width:145px;height:62px"><div class="cl">Product_in_ThickD...</div><div class="cs">Letzter Wert</div><div class="cm" style="right:8px;top:40px">96.40<span style="font-size:12px"> %</span></div></div>
<div class="card" style="left:316px;top:162px;width:302px;height:62px"><div class="cl">_TimeStamp</div><div class="cs">Letzter Wert</div><div class="cm" style="left:8px;top:40px">30.01.2024 00:57:39</div></div>
<div class="card" style="left:5px;top:234px;width:146px;height:62px"><div class="cl">Thickness_Dev_AVG</div><div class="cs">Letzter Wert</div><div class="cm" style="right:8px;top:40px">8.00<span style="font-size:12px"> µm</span></div></div>
<div class="card" style="left:161px;top:234px;width:145px;height:62px"><div class="cl">Product_Length</div><div class="cs">Letzter Wert</div><div class="cm" style="right:8px;top:40px">445.00<span style="font-size:12px"> m</span></div></div>
<div class="card" style="left:316px;top:234px;width:302px;height:62px"><div class="cl">OrderNo</div><div class="cs">Letzter Wert</div><div class="cm" style="left:8px;top:40px">94</div></div>
<div class="card" style="left:5px;top:305px;width:146px;height:62px"><div class="cl">RollingForce_Nom...</div><div class="cs">Letzter Wert</div><div class="cm" style="right:8px;top:40px">3410.82<span style="font-size:12px"> kN</span></div></div>
<div class="card" style="left:161px;top:305px;width:145px;height:62px"><div class="cl">RollingForce_Devi...</div><div class="cs">Letzter Wert</div><div class="cm" style="right:8px;top:40px">-73.18<span style="font-size:12px"> kN</span></div></div>
<div class="xb" style="left:0px;top:405px;border-width:1px 1px 0 0;border-radius:0 5px 0 4px"><svg width="40" height="40" viewBox="0 0 40 40" style="position:absolute;left:-1px;top:-1px">
<path d="M15.1 28.2 L26 17.3" stroke="#3f9d74" stroke-width="1.55" fill="none"/>
<path d="M21 17.1 H26.4 V22.5" stroke="#3f9d74" stroke-width="1.95" fill="none"/>
<path d="M14.8 23.5 V28.7 H20" stroke="#3f9d74" stroke-width="1.95" fill="none"/>
</svg></div>
<div class="xb" style="left:583px;top:405px;border-width:1px 0 0 1px;border-radius:5px 0 4px 0"><svg width="40" height="40" viewBox="0 0 40 40" style="position:absolute;left:-1px;top:-1px">
<path d="M14.6 17.4 L25.4 28.2" stroke="#3f9d74" stroke-width="1.55" fill="none"/>
<path d="M14.2 22.2 V17 H19.4" stroke="#3f9d74" stroke-width="1.95" fill="none"/>
<path d="M25.8 23.2 V28.6 H20.5" stroke="#3f9d74" stroke-width="1.95" fill="none"/>
</svg></div>
</div>
<div class="tile" style="left:1282px;top:586px;width:623px;height:444px">
<div class="th">
<svg style="position:absolute;left:15.5px;top:15.5px" width="17" height="17" viewBox="0 0 17 17">
<rect x="1.3" y="1.2" width="14.2" height="14.6" fill="none" stroke="#00734a" stroke-width="1.15"/>
<path d="M1.3 4.4H15.5M1.3 9.4H15.5M1.3 12.4H15.5M4.6 4.4V15.8M9 4.4V15.8" stroke="#00734a" stroke-width=".75" fill="none" opacity=".9"/>
<path d="M1.3 6.9H15.5" stroke="#00734a" stroke-width=".7" fill="none" opacity=".45"/>
</svg>
<div class="tt" style="left:42px;top:9px">Last Product</div>
<div class="ts" style="left:42px;top:29px">Finishing Line Hamburg - no dat files available Datensätze: <b>7593</b></div>
<svg style="position:absolute;left:566px;top:14px" width="10" height="20" viewBox="0 0 10 20">
<circle cx="5" cy="4.3" r="1.9" fill="none" stroke="#00734a" stroke-width="1.2"/>
<circle cx="5" cy="9.8" r="1.9" fill="none" stroke="#00734a" stroke-width="1.2"/>
<circle cx="5" cy="15.2" r="1.9" fill="none" stroke="#00734a" stroke-width="1.2"/>
</svg>
<svg style="position:absolute;left:593px;top:14px" width="20" height="20" viewBox="0 0 20 20">
<path d="M8.67 4.66 L8.81 2.85 L11.19 2.85 L11.33 4.66 L12.84 5.29 L14.22 4.10 L15.90 5.78 L14.71 7.16 L15.34 8.67 L17.15 8.81 L17.15 11.19 L15.34 11.33 L14.71 12.84 L15.90 14.22 L14.22 15.90 L12.84 14.71 L11.33 15.34 L11.19 17.15 L8.81 17.15 L8.67 15.34 L7.16 14.71 L5.78 15.90 L4.10 14.22 L5.29 12.84 L4.66 11.33 L2.85 11.19 L2.85 8.81 L4.66 8.67 L5.29 7.16 L4.10 5.78 L5.78 4.10 L7.16 5.29Z" fill="none" stroke="#00734a" stroke-width="1.3" stroke-linejoin="miter"/>
<circle cx="10" cy="10" r="2.5" fill="none" stroke="#00734a" stroke-width="0.9" opacity=".85"/>
</svg>
</div>
<div class="card" style="left:5px;top:54px;width:146px;height:97px"><div class="cl">CoilID</div><div class="cs">Letzter Wert</div><div class="cv">12392</div></div>
<div class="card" style="left:161px;top:54px;width:145px;height:97px"><div class="cl">_No</div><div class="cs">Letzter Wert</div><div class="cv">002</div></div>
<div class="card" style="left:316px;top:54px;width:302px;height:97px"><div class="cl">Material_TXT</div><div class="cs">Letzter Wert</div><div class="cv">5 CrMo 7-9</div></div>
<div class="card" style="left:5px;top:162px;width:146px;height:62px"><div class="cl">Thickness</div><div class="cs">Letzter Wert</div><div class="cm" style="right:8px;top:40px">2.12<span style="font-size:12px"> mm</span></div></div>
<div class="card" style="left:161px;top:162px;width:145px;height:62px"><div class="cl">Procuct_in_ThickD...</div><div class="cs">Letzter Wert</div><div class="cm" style="right:8px;top:40px">97.33<span style="font-size:12px"> %</span></div></div>
<div class="card" style="left:316px;top:162px;width:302px;height:62px"><div class="cl">_TimeStamp</div><div class="cs">Letzter Wert</div><div class="cm" style="left:8px;top:40px">30.01.2024 00:32:03</div></div>
<div class="card" style="left:5px;top:234px;width:146px;height:62px"><div class="cl">Thickness_Dev_AVG</div><div class="cs">Letzter Wert</div><div class="cm" style="right:8px;top:40px">2.05<span style="font-size:12px"> µm</span></div></div>
<div class="card" style="left:161px;top:234px;width:145px;height:62px"><div class="cl">Length</div><div class="cs">Letzter Wert</div><div class="cm" style="right:8px;top:40px">675.17<span style="font-size:12px"> m</span></div></div>
<div class="card" style="left:316px;top:234px;width:302px;height:62px"><div class="cl">Order_No</div><div class="cs">Letzter Wert</div><div class="cm" style="left:8px;top:40px">92</div></div>
<div class="card" style="left:5px;top:305px;width:146px;height:62px"><div class="cl">RollingForce_Nom...</div><div class="cs">Letzter Wert</div><div class="cm" style="right:8px;top:40px">2633.33<span style="font-size:12px"> kN</span></div></div>
<div class="card" style="left:161px;top:305px;width:145px;height:62px"><div class="cl">RollingForce_Actu...</div><div class="cs">Letzter Wert</div><div class="cm" style="right:8px;top:40px">2673.97<span style="font-size:12px"> kN</span></div></div>
<div class="xb" style="left:0px;top:405px;border-width:1px 1px 0 0;border-radius:0 5px 0 4px"><svg width="40" height="40" viewBox="0 0 40 40" style="position:absolute;left:-1px;top:-1px">
<path d="M15.1 28.2 L26 17.3" stroke="#3f9d74" stroke-width="1.55" fill="none"/>
<path d="M21 17.1 H26.4 V22.5" stroke="#3f9d74" stroke-width="1.95" fill="none"/>
<path d="M14.8 23.5 V28.7 H20" stroke="#3f9d74" stroke-width="1.95" fill="none"/>
</svg></div>
<div class="xb" style="left:583px;top:405px;border-width:1px 0 0 1px;border-radius:5px 0 4px 0"><svg width="40" height="40" viewBox="0 0 40 40" style="position:absolute;left:-1px;top:-1px">
<path d="M14.6 17.4 L25.4 28.2" stroke="#3f9d74" stroke-width="1.55" fill="none"/>
<path d="M14.2 22.2 V17 H19.4" stroke="#3f9d74" stroke-width="1.95" fill="none"/>
<path d="M25.8 23.2 V28.6 H20.5" stroke="#3f9d74" stroke-width="1.95" fill="none"/>
</svg></div>
</div>
</body></html>
